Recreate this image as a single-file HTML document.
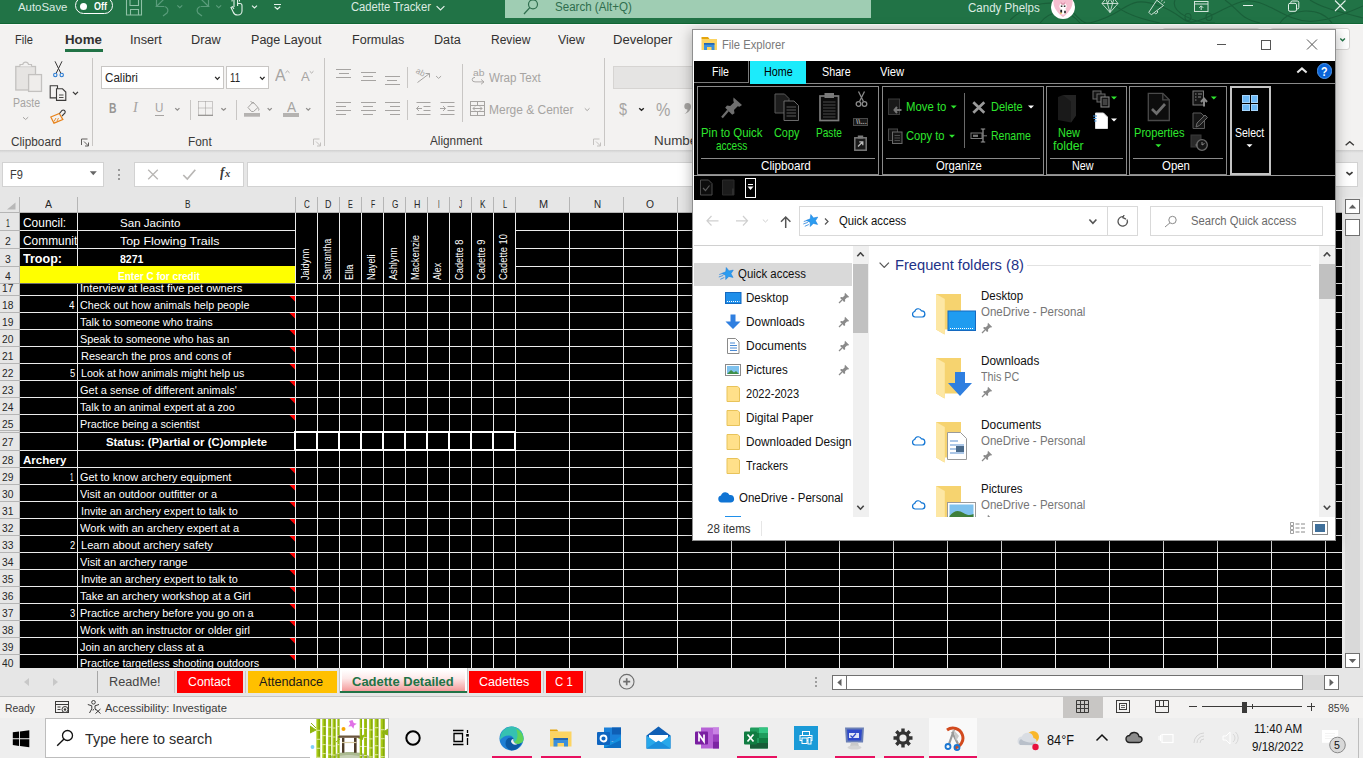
<!DOCTYPE html>
<html><head><meta charset="utf-8"><title>Cadette Tracker</title>
<style>
html,body{margin:0;padding:0;}
body{width:1363px;height:758px;overflow:hidden;position:relative;background:#e6e6e6;font-family:"Liberation Sans",sans-serif;}
#r{position:absolute;left:0;top:0;width:1363px;height:758px;overflow:hidden;}
#r div,#r svg{position:absolute;box-sizing:border-box;}
.t{white-space:nowrap;}
</style></head><body><div id="r">
<div style="left:0px;top:0px;width:1363px;height:23px;background:#217346;"></div>
<div style="left:0px;top:23px;width:1363px;height:1px;background:#106634;"></div>
<div style="left:505px;top:0px;width:366px;height:18px;background:#9fcdb3;"></div>
<svg style="left:1010px;top:0px;" width="353" height="23" viewBox="0 0 353 23"><path d="M0 20C20 2 45 -2 60 10S70 28 95 18S120 -5 150 6S170 30 200 16S235 -6 262 8S300 30 353 6M30 23C40 10 58 8 70 23M100 0C110 14 135 20 150 23M165 0C160 12 185 24 205 23M215 0C230 10 228 18 250 23M270 23C280 8 310 6 322 23M300 0C312 8 330 12 353 18M175 17a3 3.500 0 1 0 6 0a3 3.500 0 1 0 -6 0M196 17a3 3.500 0 1 0 6 0a3 3.500 0 1 0 -6 0" fill="none" stroke="#185a36" stroke-width="1.100" opacity="0.800"/></svg>
<div class="t" style="left:18.3px;top:-1px;font-size:11.7px;color:#dcebe2;line-height:15px;transform-origin:0 0;transform:scaleX(0.9754);">AutoSave</div>
<div style="left:74.8px;top:-3px;width:38.2px;height:16.6px;border:1px solid #fff;border-radius:9px;"></div>
<div style="left:79.7px;top:2.7px;width:7.2px;height:7.2px;background:#fff;border-radius:4px;"></div>
<div class="t" style="left:94.2px;top:-1px;font-size:10.5px;color:#fff;line-height:14px;transform-origin:0 0;transform:scaleX(0.8568);font-weight:bold;">Off</div>
<svg style="left:125px;top:-2px;" width="19" height="19" viewBox="0 0 19 19"><path d="M1.500 -1V17H16.500V-1M5 -1V7.500H13.500V-1M5.500 17V11.500H13.500V17" fill="none" stroke="#8fc1a6" stroke-width="1.100"/></svg>
<svg style="left:155px;top:-2px;" width="16" height="19" viewBox="0 0 16 19"><path d="M11 -1L1.500 8.500H9M1.500 8.500V1" fill="none" stroke="#5a9c7b" stroke-width="1.200"/><path d="M9 8.500L2 17.500" fill="none" stroke="#5a9c7b" stroke-width="0"/><path d="M9.500 8.500a4 4 0 0 1 2.500 6.500l-4 3" fill="none" stroke="#5a9c7b" stroke-width="1.200"/></svg>
<svg style="left:176px;top:4px;" width="7" height="5" viewBox="0 0 7 5"><g transform="translate(0.8,0.8)"><path d="M0.55 0.55L3 2.85L5.45 0.55" fill="none" stroke="#5a9c7b" stroke-width="1.1"/></g></svg>
<svg style="left:194px;top:-2px;" width="16" height="19" viewBox="0 0 16 19"><path d="M5 -1L14.500 8.500H7M14.500 8.500V1" fill="none" stroke="#5a9c7b" stroke-width="1.200"/><path d="M6.500 8.500a4 4 0 0 0 -2.500 6.500l4 3" fill="none" stroke="#5a9c7b" stroke-width="1.200"/></svg>
<svg style="left:215px;top:4px;" width="7" height="5" viewBox="0 0 7 5"><g transform="translate(0.7,0.8)"><path d="M0.55 0.55L3 2.85L5.45 0.55" fill="none" stroke="#5a9c7b" stroke-width="1.1"/></g></svg>
<svg style="left:230px;top:-2px;" width="13" height="18" viewBox="0 0 13 18"><path d="M4 9V2.500a1.800 1.800 0 0 1 3.600 0V8M7.600 5.500h2.400a2 2 0 0 1 2 2v5.500a4 4 0 0 1-4 4H7.500a4.500 4.500 0 0 1-4.300-3L1 9.500l1.500-.8L4 11" fill="none" stroke="#e4f1ea" stroke-width="1.100"/><path d="M2 3.500a4 4 0 0 1 1-3M9.600 3.500a4 4 0 0 0-1-3" fill="none" stroke="#e4f1ea" stroke-width="1"/></svg>
<svg style="left:251px;top:5px;" width="8" height="5" viewBox="0 0 8 5"><g transform="translate(0.4,0)"><path d="M0.6 0.6L3.1 2.9L5.6 0.6" fill="none" stroke="#e4f1ea" stroke-width="1.2"/></g></svg>
<div style="left:273.6px;top:3.6px;width:7.5px;height:1.1px;background:#e4f1ea;"></div>
<svg style="left:274px;top:6px;" width="8" height="5" viewBox="0 0 8 5"><g transform="translate(0,0.2)"><path d="M0.6 0.6L3.4 3L6.2 0.6" fill="none" stroke="#e4f1ea" stroke-width="1.2"/></g></svg>
<div class="t" style="left:350.9px;top:-1px;font-size:12px;color:#dcebe2;line-height:16px;transform-origin:0 0;transform:scaleX(0.9358);">Cadette Tracker</div>
<svg style="left:436px;top:5px;" width="10" height="6" viewBox="0 0 10 6"><g transform="translate(0,0.5)"><path d="M0.6 0.6L4.5 4.4L8.4 0.6" fill="none" stroke="#e4f1ea" stroke-width="1.2"/></g></svg>
<svg style="left:523px;top:-3px;" width="17" height="19" viewBox="0 0 17 19"><circle cx="10" cy="7.300" r="4.500" fill="none" stroke="#2f6e4e" stroke-width="1.200"/><path d="M6.800 10.600L1 17" stroke="#2f6e4e" stroke-width="1.300"/></svg>
<div class="t" style="left:554.5px;top:-1px;font-size:12px;color:#2f6e4e;line-height:16px;transform-origin:0 0;transform:scaleX(0.9635);">Search (Alt+Q)</div>
<div class="t" style="left:968.2px;top:0px;font-size:12px;color:#dcebe2;line-height:16px;transform-origin:0 0;transform:scaleX(0.9608);">Candy Phelps</div>
<div style="left:1051px;top:-5.3px;width:24px;height:24px;background:#ffffff;border-radius:12px;"></div>
<svg style="left:1051px;top:-6px;" width="25" height="25" viewBox="0 0 25 25"><g transform="translate(0,0.7)"><path d="M12 22.500C4 16 2.500 11 2.500 7.500a4.800 4.800 0 0 1 9.500-1.500a4.800 4.800 0 0 1 9.500 1.500c0 3.500-1.500 8.500-9.500 15z" fill="#f6bfd0"/><ellipse cx="12" cy="11.500" rx="3.600" ry="3" fill="#fff"/><ellipse cx="12" cy="16.500" rx="3.200" ry="3.300" fill="#fff"/><path d="M9.500 6.500l1.500 2h2l1.500-2l-1 3.500h-3z" fill="#d98aa5"/><rect x="9.800" y="10.800" width="1.600" height="1.400" fill="#222"/><rect x="12.800" y="10.800" width="1.600" height="1.400" fill="#222"/><path d="M9.300 15h1.800v3h-1.800zM13.200 16h1.600v2.600h-1.600z" fill="#222"/><rect x="9.200" y="17.800" width="1.500" height="1.400" fill="#e9b84a"/></g></svg>
<svg style="left:1101px;top:-2px;" width="18" height="17" viewBox="0 0 18 17"><g transform="translate(0.5,0)"><path d="M4.500 0.500h8l4 5l-8 9l-8-9zM0.500 5.500h16M4.500 0.500l4 14l4-14M6 5.500l2.500-5l2.500 5" fill="none" stroke="#cfe3d8" stroke-width="0.900"/></g></svg>
<svg style="left:1147px;top:-1px;" width="19" height="17" viewBox="0 0 19 17"><path d="M1.800 13.300L9.800 1.200l6.700 5.300L4.300 15.800z" fill="none" stroke="#cfe3d8" stroke-width="1"/><path d="M7.300 13.800a1.800 1.800 0 0 0 3 -2" fill="none" stroke="#cfe3d8" stroke-width="1"/><path d="M14.500 2.500l1-2M16.500 4l1.500-1.200M12.800 1l.3-1.500" stroke="#cfe3d8" stroke-width="0.900"/></svg>
<svg style="left:1194px;top:1px;" width="15" height="11" viewBox="0 0 15 11"><rect x="0.500" y="0.500" width="13.500" height="10" fill="none" stroke="#cfe3d8" stroke-width="1"/><path d="M0.500 3h13.500M7.200 9V5M5.200 6.800l2-2l2 2" fill="none" stroke="#cfe3d8" stroke-width="1"/></svg>
<div style="left:1243.3px;top:4.6px;width:10px;height:1px;background:#e4f1ea;"></div>
<svg style="left:1288px;top:0px;" width="13" height="13" viewBox="0 0 13 13"><g transform="translate(0,0.5)"><rect x="0.500" y="2.800" width="8" height="8" rx="1.500" fill="none" stroke="#e4f1ea" stroke-width="1"/><path d="M2.800 2.800V2a1.500 1.500 0 0 1 1.500-1.500h5a1.500 1.500 0 0 1 1.500 1.500v5a1.500 1.500 0 0 1-1.500 1.500h-.8" fill="none" stroke="#e4f1ea" stroke-width="1"/></g></svg>
<svg style="left:1334px;top:0px;" width="13" height="12" viewBox="0 0 13 12"><path d="M1 0.500l10.500 10.500M11.500 0.500l-10.500 10.500" stroke="#e4f1ea" stroke-width="1.100"/></svg>
<div style="left:0px;top:24px;width:1363px;height:126px;background:#f3f2f1;"></div>
<div style="left:0px;top:24px;width:1363px;height:1px;background:#fbfbfa;"></div>
<div style="left:0px;top:150px;width:1363px;height:3px;background:linear-gradient(#d0d0d0,#e6e6e6);"></div>
<div class="t" style="left:14.5px;top:31px;font-size:13.7px;color:#323130;line-height:17px;transform-origin:0 0;transform:scaleX(0.8103);">File</div>
<div class="t" style="left:65.4px;top:31px;font-size:13.7px;color:#323130;line-height:17px;transform-origin:0 0;transform:scaleX(0.9697);font-weight:bold;">Home</div>
<div class="t" style="left:130.2px;top:31px;font-size:13.7px;color:#323130;line-height:17px;transform-origin:0 0;transform:scaleX(0.9314);">Insert</div>
<div class="t" style="left:191.3px;top:31px;font-size:13.7px;color:#323130;line-height:17px;transform-origin:0 0;transform:scaleX(0.9274);">Draw</div>
<div class="t" style="left:251.2px;top:31px;font-size:13.7px;color:#323130;line-height:17px;transform-origin:0 0;transform:scaleX(0.9178);">Page Layout</div>
<div class="t" style="left:352.3px;top:31px;font-size:13.7px;color:#323130;line-height:17px;transform-origin:0 0;transform:scaleX(0.9178);">Formulas</div>
<div class="t" style="left:434px;top:31px;font-size:13.7px;color:#323130;line-height:17px;transform-origin:0 0;transform:scaleX(0.9226);">Data</div>
<div class="t" style="left:490.5px;top:31px;font-size:13.7px;color:#323130;line-height:17px;transform-origin:0 0;transform:scaleX(0.8784);">Review</div>
<div class="t" style="left:558.3px;top:31px;font-size:13.7px;color:#323130;line-height:17px;transform-origin:0 0;transform:scaleX(0.9054);">View</div>
<div class="t" style="left:613.3px;top:31px;font-size:13.7px;color:#323130;line-height:17px;transform-origin:0 0;transform:scaleX(0.9529);">Developer</div>
<div style="left:65.4px;top:48.5px;width:37.2px;height:3px;background:#217346;"></div>
<svg style="left:14px;top:60px;" width="30" height="34" viewBox="0 0 30 34"><rect x="1.800" y="6.500" width="19.700" height="23.500" fill="#e6e4e2" stroke="#c3c1bf" stroke-width="1.300"/><path d="M6 6.500V4.500h2.800a2.900 2.900 0 0 1 5.700 0H17.500v2" fill="#f3f2f1" stroke="#c3c1bf" stroke-width="1.200"/><rect x="14.600" y="14.600" width="12.900" height="16.800" fill="#efedeb" stroke="#c3c1bf" stroke-width="1.300"/></svg>
<div class="t" style="left:13px;top:95px;font-size:12px;color:#a6a4a2;line-height:16px;transform-origin:0 0;transform:scaleX(0.8798);">Paste</div>
<svg style="left:22px;top:116px;" width="8" height="5" viewBox="0 0 8 5"><g transform="translate(0.5,0.7)"><path d="M0.5 0.5L3.1 2.8L5.7 0.5" fill="none" stroke="#a6a4a2" stroke-width="1"/></g></svg>
<svg style="left:53px;top:61px;" width="11" height="17" viewBox="0 0 11 17"><path d="M2 0.300L7.700 12M9 0.300L3.300 12" stroke="#3b3a39" stroke-width="1" fill="none"/><circle cx="2.300" cy="14" r="1.700" fill="none" stroke="#2b7cd3" stroke-width="1.100"/><circle cx="8.700" cy="14" r="1.700" fill="none" stroke="#2b7cd3" stroke-width="1.100"/></svg>
<svg style="left:49px;top:85px;" width="19" height="18" viewBox="0 0 19 18"><g transform="translate(0.5,0)"><path d="M0.700 0.700h7.300v12.200h-7.300z" fill="#f3f2f1" stroke="#3b3a39" stroke-width="1.100"/><path d="M7 3.800h6l3.300 3.300v8.300H7z" fill="#f3f2f1" stroke="#3b3a39" stroke-width="1.100"/><path d="M9.500 10h4.500M9.500 12.500h4.500" stroke="#3b3a39" stroke-width="0.900" fill="none"/></g></svg>
<svg style="left:72px;top:91px;" width="8" height="5" viewBox="0 0 8 5"><g transform="translate(0.3,0.2)"><path d="M0.65 0.65L3.15 3.15L5.65 0.65" fill="none" stroke="#3b3a39" stroke-width="1.3"/></g></svg>
<svg style="left:50px;top:108px;" width="17" height="16" viewBox="0 0 17 16"><path d="M0.800 9l8.500-3.500l3.500 6l-8.800 3.700z" fill="none" stroke="#e8831a" stroke-width="1.300"/><path d="M4 13.500l2-3.500M7 13l1.500-3" stroke="#e8831a" stroke-width="0.900"/><path d="M9.500 5.500l2.500-3a2 2 0 0 1 3 2.500l-3 3" fill="none" stroke="#3b3a39" stroke-width="1.100"/></svg>
<div class="t" style="left:11.2px;top:134px;font-size:12px;color:#3b3a39;line-height:16px;transform-origin:0 0;transform:scaleX(0.9813);">Clipboard</div>
<svg style="left:81px;top:138px;" width="10" height="10" viewBox="0 0 10 10"><g transform="translate(0,0.5)"><path d="M0.500 6.500V0.500H6.500M3 3l4.500 4.500M7.500 4v3.500H4" fill="none" stroke="#605e5c" stroke-width="1"/></g></svg>
<div style="left:92px;top:58px;width:1px;height:88px;background:#c8c6c4;"></div>
<div style="left:101px;top:66px;width:123px;height:23px;background:#fff;border:1px solid #c8c6c4;"></div>
<div class="t" style="left:104.8px;top:70px;font-size:12.3px;color:#252423;line-height:16px;transform-origin:0 0;transform:scaleX(0.9435);">Calibri</div>
<svg style="left:214px;top:76px;" width="7" height="5" viewBox="0 0 7 5"><g transform="translate(0.5,0.2)"><path d="M0.65 0.65L2.9 3.15L5.15 0.65" fill="none" stroke="#252423" stroke-width="1.3"/></g></svg>
<div style="left:226px;top:66px;width:43px;height:23px;background:#fff;border:1px solid #c8c6c4;"></div>
<div class="t" style="left:230px;top:70px;font-size:12.3px;color:#252423;line-height:16px;transform-origin:0 0;transform:scaleX(0.7836);">11</div>
<svg style="left:259px;top:76px;" width="7" height="5" viewBox="0 0 7 5"><g transform="translate(0.4,0.2)"><path d="M0.65 0.65L2.9 3.15L5.15 0.65" fill="none" stroke="#252423" stroke-width="1.3"/></g></svg>
<div class="t" style="left:275px;top:66px;font-size:15.6px;color:#a6a4a2;line-height:19px;transform-origin:0 0;transform:scaleX(1.0180);">A</div>
<svg style="left:285px;top:70px;" width="6" height="4" viewBox="0 0 6 4"><g transform="translate(0,0.5)"><path d="M0.45 2.35L2.5 0.45L4.55 2.35" fill="none" stroke="#a6a4a2" stroke-width="0.9"/></g></svg>
<div class="t" style="left:300.6px;top:69px;font-size:12.2px;color:#a6a4a2;line-height:16px;transform-origin:0 0;transform:scaleX(1.0683);">A</div>
<svg style="left:309px;top:70px;" width="6" height="4" viewBox="0 0 6 4"><g transform="translate(0.3,0.8)"><path d="M0.45 0.45L2.3 2.25L4.15 0.45" fill="none" stroke="#a6a4a2" stroke-width="0.9"/></g></svg>
<div class="t" style="left:108.5px;top:99px;font-size:14px;color:#989694;line-height:18px;transform-origin:0 0;transform:scaleX(0.7415);font-weight:bold;">B</div>
<div class="t" style="left:133.07px;top:99px;font-size:14px;color:#a6a4a2;line-height:18px;transform-origin:0 0;transform:scaleX(1.0218);font-style:italic;font-family:'Liberation Serif',serif;">I</div>
<div class="t" style="left:155px;top:99px;font-size:13.3px;color:#a6a4a2;line-height:17px;transform-origin:0 0;transform:scaleX(0.8742);">U</div>
<div style="left:155px;top:114.6px;width:8.5px;height:1px;background:#a6a4a2;"></div>
<svg style="left:174px;top:107px;" width="7" height="5" viewBox="0 0 7 5"><g transform="translate(0.6,0.5)"><path d="M0.65 0.65L2.75 2.65L4.85 0.65" fill="none" stroke="#8f8d8b" stroke-width="1.3"/></g></svg>
<div style="left:190px;top:99.5px;width:1px;height:20px;background:#c8c6c4;"></div>
<svg style="left:198px;top:101px;" width="16" height="16" viewBox="0 0 16 16"><path d="M0.500 0.500h14M0.500 0.500v13M14.500 0.500v13M7.500 0.500v13M0.500 7h14" fill="none" stroke="#9d9b99" stroke-width="1" stroke-dasharray="1 1"/><path d="M0 14.300h15" stroke="#8f8d8b" stroke-width="1.200"/></svg>
<svg style="left:220px;top:107px;" width="7" height="5" viewBox="0 0 7 5"><g transform="translate(0.7,0.5)"><path d="M0.65 0.65L2.9 2.65L5.15 0.65" fill="none" stroke="#8f8d8b" stroke-width="1.3"/></g></svg>
<div style="left:236px;top:99.5px;width:1px;height:20px;background:#c8c6c4;"></div>
<svg style="left:244px;top:100px;" width="18" height="18" viewBox="0 0 18 18"><path d="M4 7.500l5-5.500l5 5.500l-4.500 4h-2z" fill="none" stroke="#a6a4a2" stroke-width="1"/><path d="M6.500 1l3 3M14 7.500c1 1.500 1.500 2.500 0 3" stroke="#a6a4a2" stroke-width="1" fill="none"/><rect x="0" y="13" width="16" height="3.700" fill="#b5b3b1"/></svg>
<svg style="left:267px;top:107px;" width="7" height="5" viewBox="0 0 7 5"><g transform="translate(0,0.5)"><path d="M0.65 0.65L2.7 2.65L4.75 0.65" fill="none" stroke="#8f8d8b" stroke-width="1.3"/></g></svg>
<div class="t" style="left:286.6px;top:97px;font-size:15.4px;color:#a6a4a2;line-height:19px;transform-origin:0 0;transform:scaleX(0.8853);">A</div>
<div style="left:283px;top:113px;width:16px;height:3.7px;background:#b5b3b1;"></div>
<svg style="left:305px;top:107px;" width="7" height="5" viewBox="0 0 7 5"><g transform="translate(0.5,0.5)"><path d="M0.65 0.65L2.75 2.65L4.85 0.65" fill="none" stroke="#8f8d8b" stroke-width="1.3"/></g></svg>
<div class="t" style="left:188.3px;top:134px;font-size:12px;color:#3b3a39;line-height:16px;transform-origin:0 0;transform:scaleX(0.9875);">Font</div>
<svg style="left:313px;top:138px;" width="10" height="10" viewBox="0 0 10 10"><g transform="translate(0,0.5)"><path d="M0.500 6.500V0.500H6.500M3 3l4.500 4.500M7.500 4v3.500H4" fill="none" stroke="#c3c1bf" stroke-width="1"/></g></svg>
<div style="left:324px;top:58px;width:1px;height:88px;background:#c8c6c4;"></div>
<div style="left:336.4px;top:68.8px;width:14.5px;height:1px;background:#a6a4a2;"></div>
<div style="left:338.65px;top:72.9px;width:10px;height:1px;background:#a6a4a2;"></div>
<div style="left:336.4px;top:77px;width:14.5px;height:1px;background:#a6a4a2;"></div>
<div style="left:361px;top:72px;width:14.5px;height:1px;background:#a6a4a2;"></div>
<div style="left:363.25px;top:76px;width:10px;height:1px;background:#a6a4a2;"></div>
<div style="left:361px;top:80px;width:14.5px;height:1px;background:#a6a4a2;"></div>
<div style="left:385px;top:75.5px;width:14.5px;height:1px;background:#a6a4a2;"></div>
<div style="left:387.25px;top:79.5px;width:10px;height:1px;background:#a6a4a2;"></div>
<div style="left:385px;top:83.5px;width:14.5px;height:1px;background:#a6a4a2;"></div>
<div style="left:407px;top:67px;width:1px;height:21px;background:#c8c6c4;"></div>
<svg style="left:415px;top:68px;" width="17" height="17" viewBox="0 0 17 17"><path d="M2.500 14.500L14.500 5.500M14.500 5.500h-4M14.500 5.500v4" fill="none" stroke="#a6a4a2" stroke-width="1"/></svg>
<div class="t" style="left:415.5px;top:66px;transform:rotate(28deg) scaleX(0.95);xleft:0px;xtop:-9px;font-size:8.5px;color:#a6a4a2;line-height:12px;xt:scaleX(0.9518);">ab</div>
<svg style="left:435px;top:75px;" width="7" height="5" viewBox="0 0 7 5"><g transform="translate(0.6,0.6)"><path d="M0.5 0.5L3 2.8L5.5 0.5" fill="none" stroke="#a6a4a2" stroke-width="1"/></g></svg>
<div style="left:336.4px;top:102px;width:14.5px;height:1px;background:#a6a4a2;"></div>
<div style="left:336.4px;top:106px;width:10px;height:1px;background:#a6a4a2;"></div>
<div style="left:336.4px;top:110px;width:14.5px;height:1px;background:#a6a4a2;"></div>
<div style="left:336.4px;top:114px;width:10px;height:1px;background:#a6a4a2;"></div>
<div style="left:361px;top:102px;width:14.5px;height:1px;background:#a6a4a2;"></div>
<div style="left:363.25px;top:106px;width:10px;height:1px;background:#a6a4a2;"></div>
<div style="left:361px;top:110px;width:14.5px;height:1px;background:#a6a4a2;"></div>
<div style="left:363.25px;top:114px;width:10px;height:1px;background:#a6a4a2;"></div>
<div style="left:385px;top:102px;width:14.5px;height:1px;background:#a6a4a2;"></div>
<div style="left:389.5px;top:106px;width:10px;height:1px;background:#a6a4a2;"></div>
<div style="left:385px;top:110px;width:14.5px;height:1px;background:#a6a4a2;"></div>
<div style="left:389.5px;top:114px;width:10px;height:1px;background:#a6a4a2;"></div>
<div style="left:407px;top:99.5px;width:1px;height:20px;background:#c8c6c4;"></div>
<svg style="left:416px;top:101px;" width="15" height="15" viewBox="0 0 15 15"><path d="M0.500 1.500h14M7.500 5.500h7M7.500 9.500h7M0.500 13.500h14M0.500 7.500h5.500M3 5L0.500 7.500l2.500 2.500" fill="none" stroke="#a6a4a2" stroke-width="1"/></svg>
<svg style="left:440px;top:101px;" width="15" height="15" viewBox="0 0 15 15"><path d="M0.500 1.500h14M7.500 5.500h7M7.500 9.500h7M0.500 13.500h14M0 7.500h5.500M3 5L5.500 7.500L3 10" fill="none" stroke="#a6a4a2" stroke-width="1"/></svg>
<div style="left:462px;top:64px;width:1px;height:58px;background:#c8c6c4;"></div>
<div class="t" style="left:472.5px;top:66px;font-size:9.5px;color:#a6a4a2;line-height:13px;transform-origin:0 0;transform:scaleX(1.0881);">ab</div>
<svg style="left:471px;top:77px;" width="15" height="9" viewBox="0 0 15 9"><g transform="translate(0.5,0)"><path d="M3.500 0.500a2.800 2.800 0 0 0 0 5.600h9M9.500 3l3 3.100l-3 3" fill="none" stroke="#a6a4a2" stroke-width="1" transform="scale(1,0.800)"/></g></svg>
<div class="t" style="left:489px;top:70px;font-size:12px;color:#a6a4a2;line-height:16px;transform-origin:0 0;transform:scaleX(0.9649);">Wrap Text</div>
<svg style="left:470px;top:101px;" width="16" height="16" viewBox="0 0 16 16"><rect x="0.500" y="0.500" width="14" height="14" fill="none" stroke="#a6a4a2" stroke-width="1"/><path d="M0.500 4.500h14M0.500 10.500h14M7.500 0.500v4M7.500 10.500v4M3 7.500h9M5 5.500l-2 2l2 2M10 5.500l2 2l-2 2" fill="none" stroke="#a6a4a2" stroke-width="1"/></svg>
<div class="t" style="left:489.2px;top:102px;font-size:12px;color:#a6a4a2;line-height:16px;transform-origin:0 0;transform:scaleX(0.9974);">Merge &amp; Center</div>
<svg style="left:584px;top:107px;" width="7" height="5" viewBox="0 0 7 5"><g transform="translate(0.3,0.8)"><path d="M0.5 0.5L2.85 2.8L5.2 0.5" fill="none" stroke="#a6a4a2" stroke-width="1"/></g></svg>
<div class="t" style="left:430.3px;top:133px;font-size:12px;color:#3b3a39;line-height:16px;transform-origin:0 0;transform:scaleX(0.9800);">Alignment</div>
<svg style="left:593px;top:138px;" width="10" height="10" viewBox="0 0 10 10"><g transform="translate(0,0.5)"><path d="M0.500 6.500V0.500H6.500M3 3l4.500 4.500M7.500 4v3.500H4" fill="none" stroke="#c3c1bf" stroke-width="1"/></g></svg>
<div style="left:604px;top:58px;width:1px;height:88px;background:#c8c6c4;"></div>
<div style="left:613px;top:66px;width:120px;height:23px;background:#e5e4e3;border:1px solid #d6d4d2;"></div>
<div class="t" style="left:619.4px;top:99px;font-size:17px;color:#a6a4a2;line-height:21px;transform-origin:0 0;transform:scaleX(0.8479);">$</div>
<svg style="left:638px;top:107px;" width="7" height="5" viewBox="0 0 7 5"><g transform="translate(0.5,0.5)"><path d="M0.7 0.7L3 2.8L5.3 0.7" fill="none" stroke="#252423" stroke-width="1.4"/></g></svg>
<div class="t" style="left:655.6px;top:98px;font-size:18.4px;color:#a6a4a2;line-height:23px;transform-origin:0 0;transform:scaleX(0.8793);">%</div>
<svg style="left:683px;top:103px;" width="9" height="13" viewBox="0 0 9 13"><path d="M4.500 0a3.500 3.500 0 0 1 3.500 3.500c0 3.500-2.500 6-6.500 7.500c2-1.500 3-3 3-4.500a3.200 3.200 0 0 1-3.200-3.200a3.300 3.300 0 0 1 3.200-3.300z" fill="#a6a4a2"/></svg>
<div class="t" style="left:654.3px;top:133px;font-size:12px;color:#3b3a39;line-height:16px;transform-origin:0 0;transform:scaleX(1.1174);">Number</div>
<div style="left:1162px;top:28px;width:98px;height:22px;background:#fff;border:1px solid #d6d4d2;border-radius:3px;"></div>
<div style="left:1270px;top:28px;width:80px;height:22px;background:#fff;border:1px solid #d6d4d2;border-radius:3px;"></div>
<svg style="left:1339px;top:37px;" width="7" height="5" viewBox="0 0 7 5"><g transform="translate(0.6,0.8)"><path d="M0.7 0.7L3 2.9L5.3 0.7" fill="none" stroke="#217346" stroke-width="1.4"/></g></svg>
<svg style="left:1345px;top:141px;" width="10" height="5" viewBox="0 0 10 5"><path d="M0.65 4.35L4.75 0.65L8.85 4.35" fill="none" stroke="#3b3a39" stroke-width="1.3"/></svg>
<div style="left:0px;top:153px;width:1363px;height:44px;background:#e6e6e6;"></div>
<div style="left:2px;top:162px;width:102px;height:25px;background:#fff;border:1px solid #d2d2d2;"></div>
<div class="t" style="left:9.5px;top:167px;font-size:12.2px;color:#3b3a39;line-height:16px;transform-origin:0 0;transform:scaleX(0.9057);">F9</div>
<svg style="left:89px;top:171px;" width="9" height="6" viewBox="0 0 9 6"><g transform="translate(0.8,0.2)"><path d="M0 0h7L3.500 4z" fill="#666"/></g></svg>
<div style="left:118.3px;top:169.3px;width:1.8px;height:1.8px;background:#9a9a9a;"></div>
<div style="left:118.3px;top:173.8px;width:1.8px;height:1.8px;background:#9a9a9a;"></div>
<div style="left:118.3px;top:178.2px;width:1.8px;height:1.8px;background:#9a9a9a;"></div>
<div style="left:134px;top:162px;width:110px;height:25px;background:#fff;border:1px solid #d2d2d2;"></div>
<svg style="left:147px;top:169px;" width="12" height="12" viewBox="0 0 12 12"><g transform="translate(0.5,0)"><path d="M0.700 0.700l9.600 9.600M10.300 0.700l-9.600 9.600" stroke="#b8b6b4" stroke-width="1.300"/></g></svg>
<svg style="left:182px;top:169px;" width="15" height="12" viewBox="0 0 15 12"><g transform="translate(0.5,0)"><path d="M0.800 6l4 4l8-9.300" fill="none" stroke="#b8b6b4" stroke-width="1.700"/></g></svg>
<div class="t" style="left:219.5px;top:163px;font-size:15px;color:#3b3a39;line-height:19px;transform-origin:0 0;transform:scaleX(0.8782);font-weight:bold;font-style:italic;font-family:'Liberation Serif',serif;">f</div>
<div class="t" style="left:225.43px;top:167px;font-size:10.5px;color:#3b3a39;line-height:14px;transform-origin:0 0;transform:scaleX(1.0035);font-weight:bold;font-style:italic;font-family:'Liberation Serif',serif;">x</div>
<div style="left:247px;top:162px;width:1111px;height:25px;background:#fff;border:1px solid #d2d2d2;"></div>
<svg style="left:1345px;top:171px;" width="9" height="6" viewBox="0 0 9 6"><g transform="translate(0.6,0.3)"><path d="M0.85 0.85L3.9 3.45L6.95 0.85" fill="none" stroke="#3b3a39" stroke-width="1.7"/></g></svg>
<div style="left:0px;top:197px;width:1342px;height:16px;background:#e6e6e6;"></div>
<div style="left:20px;top:213px;width:1322px;height:455px;background:#000;"></div>
<div style="left:19px;top:197px;width:1px;height:16px;background:#b5b5b5;"></div>
<div style="left:77px;top:197px;width:1px;height:16px;background:#b5b5b5;"></div>
<div style="left:295px;top:197px;width:1px;height:16px;background:#b5b5b5;"></div>
<div style="left:317px;top:197px;width:1px;height:16px;background:#b5b5b5;"></div>
<div style="left:339px;top:197px;width:1px;height:16px;background:#b5b5b5;"></div>
<div style="left:361px;top:197px;width:1px;height:16px;background:#b5b5b5;"></div>
<div style="left:383px;top:197px;width:1px;height:16px;background:#b5b5b5;"></div>
<div style="left:405px;top:197px;width:1px;height:16px;background:#b5b5b5;"></div>
<div style="left:427px;top:197px;width:1px;height:16px;background:#b5b5b5;"></div>
<div style="left:449px;top:197px;width:1px;height:16px;background:#b5b5b5;"></div>
<div style="left:471px;top:197px;width:1px;height:16px;background:#b5b5b5;"></div>
<div style="left:493px;top:197px;width:1px;height:16px;background:#b5b5b5;"></div>
<div style="left:515px;top:197px;width:1px;height:16px;background:#b5b5b5;"></div>
<div style="left:569px;top:197px;width:1px;height:16px;background:#b5b5b5;"></div>
<div style="left:623px;top:197px;width:1px;height:16px;background:#b5b5b5;"></div>
<div style="left:677px;top:197px;width:1px;height:16px;background:#b5b5b5;"></div>
<div style="left:731px;top:197px;width:1px;height:16px;background:#b5b5b5;"></div>
<div style="left:785px;top:197px;width:1px;height:16px;background:#b5b5b5;"></div>
<div style="left:839px;top:197px;width:1px;height:16px;background:#b5b5b5;"></div>
<div style="left:893px;top:197px;width:1px;height:16px;background:#b5b5b5;"></div>
<div style="left:947px;top:197px;width:1px;height:16px;background:#b5b5b5;"></div>
<div style="left:1001px;top:197px;width:1px;height:16px;background:#b5b5b5;"></div>
<div style="left:1055px;top:197px;width:1px;height:16px;background:#b5b5b5;"></div>
<div style="left:1109px;top:197px;width:1px;height:16px;background:#b5b5b5;"></div>
<div style="left:1163px;top:197px;width:1px;height:16px;background:#b5b5b5;"></div>
<div style="left:1217px;top:197px;width:1px;height:16px;background:#b5b5b5;"></div>
<div style="left:1271px;top:197px;width:1px;height:16px;background:#b5b5b5;"></div>
<div style="left:1325px;top:197px;width:1px;height:16px;background:#b5b5b5;"></div>
<div style="left:0px;top:212px;width:1342px;height:1px;background:#b5b5b5;"></div>
<svg style="left:6px;top:201px;" width="10" height="9" viewBox="0 0 10 9"><path d="M9.500 1.500V8.500H1z" fill="#b8b8b8"/></svg>
<div class="t" style="left:45px;top:197px;font-size:11.4px;color:#262626;line-height:14px;transform-origin:0 0;transform:scaleX(0.9199);">A</div>
<div class="t" style="left:184.5px;top:197px;font-size:11.4px;color:#262626;line-height:14px;transform-origin:0 0;transform:scaleX(0.7228);">B</div>
<div class="t" style="left:303.5px;top:197px;font-size:11.4px;color:#262626;line-height:14px;transform-origin:0 0;transform:scaleX(0.7042);">C</div>
<div class="t" style="left:325.3px;top:197px;font-size:11.4px;color:#262626;line-height:14px;transform-origin:0 0;transform:scaleX(0.7770);">D</div>
<div class="t" style="left:348.2px;top:197px;font-size:11.4px;color:#262626;line-height:14px;transform-origin:0 0;transform:scaleX(0.6308);">E</div>
<div class="t" style="left:370.8px;top:197px;font-size:11.4px;color:#262626;line-height:14px;transform-origin:0 0;transform:scaleX(0.6040);">F</div>
<div class="t" style="left:391.9px;top:197px;font-size:11.4px;color:#262626;line-height:14px;transform-origin:0 0;transform:scaleX(0.7221);">G</div>
<div class="t" style="left:413.9px;top:197px;font-size:11.4px;color:#262626;line-height:14px;transform-origin:0 0;transform:scaleX(0.7770);">H</div>
<div class="t" style="left:437.5px;top:197px;font-size:11.4px;color:#262626;line-height:14px;transform-origin:0 0;transform:scaleX(0.5058);">I</div>
<div class="t" style="left:458.8px;top:197px;font-size:11.4px;color:#262626;line-height:14px;transform-origin:0 0;transform:scaleX(0.5614);">J</div>
<div class="t" style="left:480.3px;top:197px;font-size:11.4px;color:#262626;line-height:14px;transform-origin:0 0;transform:scaleX(0.7228);">K</div>
<div class="t" style="left:502.9px;top:197px;font-size:11.4px;color:#262626;line-height:14px;transform-origin:0 0;transform:scaleX(0.6480);">L</div>
<div class="t" style="left:538.6px;top:197px;font-size:11.4px;color:#262626;line-height:14px;transform-origin:0 0;transform:scaleX(0.9589);">M</div>
<div class="t" style="left:593.9px;top:197px;font-size:11.4px;color:#262626;line-height:14px;transform-origin:0 0;transform:scaleX(0.8620);">N</div>
<div class="t" style="left:646.4px;top:197px;font-size:11.4px;color:#262626;line-height:14px;transform-origin:0 0;transform:scaleX(0.9026);">O</div>
<div style="left:0px;top:213px;width:19px;height:455px;background:#e6e6e6;"></div>
<div style="left:19px;top:213px;width:1px;height:455px;background:#b5b5b5;"></div>
<div style="left:0px;top:230px;width:19px;height:1px;background:#b5b5b5;"></div>
<div style="left:0px;top:248px;width:19px;height:1px;background:#b5b5b5;"></div>
<div style="left:0px;top:266px;width:19px;height:1px;background:#b5b5b5;"></div>
<div style="left:0px;top:283px;width:19px;height:1px;background:#b5b5b5;"></div>
<div style="left:0px;top:295px;width:19px;height:1px;background:#b5b5b5;"></div>
<div style="left:0px;top:312px;width:19px;height:1px;background:#b5b5b5;"></div>
<div style="left:0px;top:329px;width:19px;height:1px;background:#b5b5b5;"></div>
<div style="left:0px;top:346px;width:19px;height:1px;background:#b5b5b5;"></div>
<div style="left:0px;top:363px;width:19px;height:1px;background:#b5b5b5;"></div>
<div style="left:0px;top:380px;width:19px;height:1px;background:#b5b5b5;"></div>
<div style="left:0px;top:397px;width:19px;height:1px;background:#b5b5b5;"></div>
<div style="left:0px;top:414px;width:19px;height:1px;background:#b5b5b5;"></div>
<div style="left:0px;top:432px;width:19px;height:1px;background:#b5b5b5;"></div>
<div style="left:0px;top:450px;width:19px;height:1px;background:#b5b5b5;"></div>
<div style="left:0px;top:467px;width:19px;height:1px;background:#b5b5b5;"></div>
<div style="left:0px;top:484px;width:19px;height:1px;background:#b5b5b5;"></div>
<div style="left:0px;top:501px;width:19px;height:1px;background:#b5b5b5;"></div>
<div style="left:0px;top:518px;width:19px;height:1px;background:#b5b5b5;"></div>
<div style="left:0px;top:535px;width:19px;height:1px;background:#b5b5b5;"></div>
<div style="left:0px;top:552px;width:19px;height:1px;background:#b5b5b5;"></div>
<div style="left:0px;top:569px;width:19px;height:1px;background:#b5b5b5;"></div>
<div style="left:0px;top:586px;width:19px;height:1px;background:#b5b5b5;"></div>
<div style="left:0px;top:603px;width:19px;height:1px;background:#b5b5b5;"></div>
<div style="left:0px;top:620px;width:19px;height:1px;background:#b5b5b5;"></div>
<div style="left:0px;top:637px;width:19px;height:1px;background:#b5b5b5;"></div>
<div style="left:0px;top:654px;width:19px;height:1px;background:#b5b5b5;"></div>
<div style="left:0px;top:430px;width:19px;height:1px;background:#b5b5b5;"></div>
<div style="left:0;top:284px;width:19px;height:384px;overflow:hidden;">
</div>
<div class="t" style="left:6.2px;top:216px;font-size:11.4px;color:#262626;line-height:14px;transform-origin:0 0;transform:scaleX(0.6006);">1</div>
<div style="left:0;top:284px;width:19px;height:384px;overflow:hidden;">
</div>
<div class="t" style="left:4.8px;top:234px;font-size:11.4px;color:#262626;line-height:14px;transform-origin:0 0;transform:scaleX(0.9167);">2</div>
<div style="left:0;top:284px;width:19px;height:384px;overflow:hidden;">
</div>
<div class="t" style="left:4.8px;top:252px;font-size:11.4px;color:#262626;line-height:14px;transform-origin:0 0;transform:scaleX(0.9167);">3</div>
<div style="left:0;top:284px;width:19px;height:384px;overflow:hidden;">
</div>
<div class="t" style="left:4.8px;top:269px;font-size:11.4px;color:#262626;line-height:14px;transform-origin:0 0;transform:scaleX(0.9167);">4</div>
<div style="left:0;top:284px;width:19px;height:384px;overflow:hidden;">
<div class="t" style="left:2.2px;top:-3px;font-size:11.4px;color:#262626;line-height:14px;transform-origin:0 0;transform:scaleX(0.8989);">17</div>
<div class="t" style="left:2.2px;top:14px;font-size:11.4px;color:#262626;line-height:14px;transform-origin:0 0;transform:scaleX(0.8989);">18</div>
<div class="t" style="left:2.2px;top:31px;font-size:11.4px;color:#262626;line-height:14px;transform-origin:0 0;transform:scaleX(0.8989);">19</div>
<div class="t" style="left:2.2px;top:48px;font-size:11.4px;color:#262626;line-height:14px;transform-origin:0 0;transform:scaleX(0.8989);">20</div>
<div class="t" style="left:2.2px;top:65px;font-size:11.4px;color:#262626;line-height:14px;transform-origin:0 0;transform:scaleX(0.8989);">21</div>
<div class="t" style="left:2.2px;top:82px;font-size:11.4px;color:#262626;line-height:14px;transform-origin:0 0;transform:scaleX(0.8989);">22</div>
<div class="t" style="left:2.2px;top:99px;font-size:11.4px;color:#262626;line-height:14px;transform-origin:0 0;transform:scaleX(0.8989);">23</div>
<div class="t" style="left:2.2px;top:116px;font-size:11.4px;color:#262626;line-height:14px;transform-origin:0 0;transform:scaleX(0.8989);">24</div>
<div class="t" style="left:2.2px;top:133px;font-size:11.4px;color:#262626;line-height:14px;transform-origin:0 0;transform:scaleX(0.8989);">25</div>
<div class="t" style="left:2.2px;top:151px;font-size:11.4px;color:#262626;line-height:14px;transform-origin:0 0;transform:scaleX(0.8989);">27</div>
<div class="t" style="left:2.2px;top:169px;font-size:11.4px;color:#262626;line-height:14px;transform-origin:0 0;transform:scaleX(0.8989);">28</div>
<div class="t" style="left:2.2px;top:186px;font-size:11.4px;color:#262626;line-height:14px;transform-origin:0 0;transform:scaleX(0.8989);">29</div>
<div class="t" style="left:2.2px;top:203px;font-size:11.4px;color:#262626;line-height:14px;transform-origin:0 0;transform:scaleX(0.8989);">30</div>
<div class="t" style="left:2.2px;top:220px;font-size:11.4px;color:#262626;line-height:14px;transform-origin:0 0;transform:scaleX(0.8989);">31</div>
<div class="t" style="left:2.2px;top:237px;font-size:11.4px;color:#262626;line-height:14px;transform-origin:0 0;transform:scaleX(0.8989);">32</div>
<div class="t" style="left:2.2px;top:254px;font-size:11.4px;color:#262626;line-height:14px;transform-origin:0 0;transform:scaleX(0.8989);">33</div>
<div class="t" style="left:2.2px;top:271px;font-size:11.4px;color:#262626;line-height:14px;transform-origin:0 0;transform:scaleX(0.8989);">34</div>
<div class="t" style="left:2.2px;top:288px;font-size:11.4px;color:#262626;line-height:14px;transform-origin:0 0;transform:scaleX(0.8989);">35</div>
<div class="t" style="left:2.2px;top:305px;font-size:11.4px;color:#262626;line-height:14px;transform-origin:0 0;transform:scaleX(0.8989);">36</div>
<div class="t" style="left:2.2px;top:322px;font-size:11.4px;color:#262626;line-height:14px;transform-origin:0 0;transform:scaleX(0.8989);">37</div>
<div class="t" style="left:2.2px;top:339px;font-size:11.4px;color:#262626;line-height:14px;transform-origin:0 0;transform:scaleX(0.8989);">38</div>
<div class="t" style="left:2.2px;top:356px;font-size:11.4px;color:#262626;line-height:14px;transform-origin:0 0;transform:scaleX(0.8989);">39</div>
<div class="t" style="left:2.2px;top:372px;font-size:11.4px;color:#262626;line-height:14px;transform-origin:0 0;transform:scaleX(0.8989);">40</div>
</div>
<div style="left:20px;top:230px;width:1322px;height:1px;background:#ebebeb;"></div>
<div style="left:20px;top:248px;width:1322px;height:1px;background:#ebebeb;"></div>
<div style="left:20px;top:266px;width:1322px;height:1px;background:#ebebeb;"></div>
<div style="left:20px;top:283px;width:1322px;height:1px;background:#ebebeb;"></div>
<div style="left:20px;top:295px;width:1322px;height:1px;background:#ebebeb;"></div>
<div style="left:20px;top:312px;width:1322px;height:1px;background:#ebebeb;"></div>
<div style="left:20px;top:329px;width:1322px;height:1px;background:#ebebeb;"></div>
<div style="left:20px;top:346px;width:1322px;height:1px;background:#ebebeb;"></div>
<div style="left:20px;top:363px;width:1322px;height:1px;background:#ebebeb;"></div>
<div style="left:20px;top:380px;width:1322px;height:1px;background:#ebebeb;"></div>
<div style="left:20px;top:397px;width:1322px;height:1px;background:#ebebeb;"></div>
<div style="left:20px;top:414px;width:1322px;height:1px;background:#ebebeb;"></div>
<div style="left:20px;top:432px;width:1322px;height:1px;background:#ebebeb;"></div>
<div style="left:20px;top:450px;width:1322px;height:1px;background:#ebebeb;"></div>
<div style="left:20px;top:467px;width:1322px;height:1px;background:#ebebeb;"></div>
<div style="left:20px;top:484px;width:1322px;height:1px;background:#ebebeb;"></div>
<div style="left:20px;top:501px;width:1322px;height:1px;background:#ebebeb;"></div>
<div style="left:20px;top:518px;width:1322px;height:1px;background:#ebebeb;"></div>
<div style="left:20px;top:535px;width:1322px;height:1px;background:#ebebeb;"></div>
<div style="left:20px;top:552px;width:1322px;height:1px;background:#ebebeb;"></div>
<div style="left:20px;top:569px;width:1322px;height:1px;background:#ebebeb;"></div>
<div style="left:20px;top:586px;width:1322px;height:1px;background:#ebebeb;"></div>
<div style="left:20px;top:603px;width:1322px;height:1px;background:#ebebeb;"></div>
<div style="left:20px;top:620px;width:1322px;height:1px;background:#ebebeb;"></div>
<div style="left:20px;top:637px;width:1322px;height:1px;background:#ebebeb;"></div>
<div style="left:20px;top:654px;width:1322px;height:1px;background:#ebebeb;"></div>
<div style="left:77px;top:213px;width:1px;height:455px;background:#ebebeb;"></div>
<div style="left:295px;top:213px;width:1px;height:455px;background:#ebebeb;"></div>
<div style="left:317px;top:213px;width:1px;height:455px;background:#ebebeb;"></div>
<div style="left:339px;top:213px;width:1px;height:455px;background:#ebebeb;"></div>
<div style="left:361px;top:213px;width:1px;height:455px;background:#ebebeb;"></div>
<div style="left:383px;top:213px;width:1px;height:455px;background:#ebebeb;"></div>
<div style="left:405px;top:213px;width:1px;height:455px;background:#ebebeb;"></div>
<div style="left:427px;top:213px;width:1px;height:455px;background:#ebebeb;"></div>
<div style="left:449px;top:213px;width:1px;height:455px;background:#ebebeb;"></div>
<div style="left:471px;top:213px;width:1px;height:455px;background:#ebebeb;"></div>
<div style="left:493px;top:213px;width:1px;height:455px;background:#ebebeb;"></div>
<div style="left:515px;top:213px;width:1px;height:455px;background:#ebebeb;"></div>
<div style="left:569px;top:213px;width:1px;height:455px;background:#ebebeb;"></div>
<div style="left:623px;top:213px;width:1px;height:455px;background:#ebebeb;"></div>
<div style="left:677px;top:213px;width:1px;height:455px;background:#ebebeb;"></div>
<div style="left:731px;top:213px;width:1px;height:455px;background:#ebebeb;"></div>
<div style="left:785px;top:213px;width:1px;height:455px;background:#ebebeb;"></div>
<div style="left:839px;top:213px;width:1px;height:455px;background:#ebebeb;"></div>
<div style="left:893px;top:213px;width:1px;height:455px;background:#ebebeb;"></div>
<div style="left:947px;top:213px;width:1px;height:455px;background:#ebebeb;"></div>
<div style="left:1001px;top:213px;width:1px;height:455px;background:#ebebeb;"></div>
<div style="left:1055px;top:213px;width:1px;height:455px;background:#ebebeb;"></div>
<div style="left:1109px;top:213px;width:1px;height:455px;background:#ebebeb;"></div>
<div style="left:1163px;top:213px;width:1px;height:455px;background:#ebebeb;"></div>
<div style="left:1217px;top:213px;width:1px;height:455px;background:#ebebeb;"></div>
<div style="left:1271px;top:213px;width:1px;height:455px;background:#ebebeb;"></div>
<div style="left:1325px;top:213px;width:1px;height:455px;background:#ebebeb;"></div>
<div style="left:296px;top:213px;width:219px;height:70px;background:#000;"></div>
<div style="left:295px;top:213px;width:1px;height:70px;background:#ebebeb;"></div>
<div style="left:317px;top:213px;width:1px;height:70px;background:#ebebeb;"></div>
<div style="left:339px;top:213px;width:1px;height:70px;background:#ebebeb;"></div>
<div style="left:361px;top:213px;width:1px;height:70px;background:#ebebeb;"></div>
<div style="left:383px;top:213px;width:1px;height:70px;background:#ebebeb;"></div>
<div style="left:405px;top:213px;width:1px;height:70px;background:#ebebeb;"></div>
<div style="left:427px;top:213px;width:1px;height:70px;background:#ebebeb;"></div>
<div style="left:449px;top:213px;width:1px;height:70px;background:#ebebeb;"></div>
<div style="left:471px;top:213px;width:1px;height:70px;background:#ebebeb;"></div>
<div style="left:493px;top:213px;width:1px;height:70px;background:#ebebeb;"></div>
<div style="left:515px;top:213px;width:1px;height:70px;background:#ebebeb;"></div>
<div style="left:20px;top:266px;width:275px;height:17px;background:#ffff00;"></div>
<div style="left:20px;top:283px;width:275px;height:1px;background:#707070;"></div>
<div class="t" style="left:22.5px;top:214px;font-size:13px;color:#fff;line-height:17px;transform-origin:0 0;transform:scaleX(0.9178);">Council:</div>
<div style="left:20px;top:231px;width:57px;height:17px;overflow:hidden;"><div class="t" style="left:2.5px;top:1px;font-size:13px;color:#fff;line-height:17px;transform-origin:0 0;transform:scaleX(0.9165);">Community:</div></div>
<div class="t" style="left:23px;top:250px;font-size:13px;color:#fff;line-height:17px;transform-origin:0 0;transform:scaleX(0.9646);font-weight:bold;">Troop:</div>
<div class="t" style="left:120px;top:216px;font-size:11.4px;color:#fff;line-height:14px;transform-origin:0 0;transform:scaleX(1.0157);">San Jacinto</div>
<div class="t" style="left:120px;top:234px;font-size:11.4px;color:#fff;line-height:14px;transform-origin:0 0;transform:scaleX(1.0907);">Top Flowing Trails</div>
<div class="t" style="left:120px;top:252px;font-size:11.4px;color:#fff;line-height:14px;transform-origin:0 0;transform:scaleX(0.9265);font-weight:bold;">8271</div>
<div class="t" style="left:118.4px;top:269px;font-size:11.4px;color:#ffffff;line-height:14px;transform-origin:0 0;transform:scaleX(0.8796);font-weight:bold;">Enter C for credit</div>
<div class="t" style="left:298.2px;top:280px;font-size:11.5px;line-height:14px;color:#fff;transform-origin:0 0;transform:rotate(-90deg) scaleX(0.7870);">Jaidynn</div>
<div class="t" style="left:320.2px;top:280px;font-size:11.5px;line-height:14px;color:#fff;transform-origin:0 0;transform:rotate(-90deg) scaleX(0.7895);">Samantha</div>
<div class="t" style="left:342.2px;top:280px;font-size:11.5px;line-height:14px;color:#fff;transform-origin:0 0;transform:rotate(-90deg) scaleX(0.8071);">Ella</div>
<div class="t" style="left:364.2px;top:280px;font-size:11.5px;line-height:14px;color:#fff;transform-origin:0 0;transform:rotate(-90deg) scaleX(0.8008);">Nayeli</div>
<div class="t" style="left:386.2px;top:280px;font-size:11.5px;line-height:14px;color:#fff;transform-origin:0 0;transform:rotate(-90deg) scaleX(0.7968);">Ashlynn</div>
<div class="t" style="left:408.2px;top:280px;font-size:11.5px;line-height:14px;color:#fff;transform-origin:0 0;transform:rotate(-90deg) scaleX(0.8186);">Mackenzie</div>
<div class="t" style="left:430.2px;top:280px;font-size:11.5px;line-height:14px;color:#fff;transform-origin:0 0;transform:rotate(-90deg) scaleX(0.7600);">Alex</div>
<div class="t" style="left:452.2px;top:280px;font-size:11.5px;line-height:14px;color:#fff;transform-origin:0 0;transform:rotate(-90deg) scaleX(0.8099);">Cadette 8</div>
<div class="t" style="left:474.2px;top:280px;font-size:11.5px;line-height:14px;color:#fff;transform-origin:0 0;transform:rotate(-90deg) scaleX(0.8099);">Cadette 9</div>
<div class="t" style="left:496.2px;top:280px;font-size:11.5px;line-height:14px;color:#fff;transform-origin:0 0;transform:rotate(-90deg) scaleX(0.8176);">Cadette 10</div>
<div style="left:20px;top:284px;width:275px;height:384px;overflow:hidden;">
<div class="t" style="left:60.3px;top:-3px;font-size:11.4px;color:#fff;line-height:14px;transform-origin:0 0;transform:scaleX(0.9826);">Interview at least five pet owners</div>
<div class="t" style="left:60.3px;top:14px;font-size:11.4px;color:#fff;line-height:14px;transform-origin:0 0;transform:scaleX(0.9418);">Check out how animals help people</div>
<div class="t" style="left:49.3px;top:14px;font-size:11.4px;color:#fff;line-height:14px;transform-origin:0 0;transform:scaleX(0.8693);">4</div>
<div class="t" style="left:60px;top:31px;font-size:11.4px;color:#fff;line-height:14px;transform-origin:0 0;transform:scaleX(0.9621);">Talk to someone who trains</div>
<div class="t" style="left:60.3px;top:48px;font-size:11.4px;color:#fff;line-height:14px;transform-origin:0 0;transform:scaleX(0.9537);">Speak to someone who has an</div>
<div class="t" style="left:60.9px;top:65px;font-size:11.4px;color:#fff;line-height:14px;transform-origin:0 0;transform:scaleX(0.9665);">Research the pros and cons of</div>
<div class="t" style="left:60.9px;top:82px;font-size:11.4px;color:#fff;line-height:14px;transform-origin:0 0;transform:scaleX(0.9342);">Look at how animals might help us</div>
<div class="t" style="left:49.6px;top:82px;font-size:11.4px;color:#fff;line-height:14px;transform-origin:0 0;transform:scaleX(0.8219);">5</div>
<div class="t" style="left:60.3px;top:99px;font-size:11.4px;color:#fff;line-height:14px;transform-origin:0 0;transform:scaleX(0.9636);">Get a sense of different animals'</div>
<div class="t" style="left:60px;top:116px;font-size:11.4px;color:#fff;line-height:14px;transform-origin:0 0;transform:scaleX(0.9438);">Talk to an animal expert at a zoo</div>
<div class="t" style="left:60.3px;top:133px;font-size:11.4px;color:#fff;line-height:14px;transform-origin:0 0;transform:scaleX(0.9484);">Practice being a scientist</div>
<div class="t" style="left:60.3px;top:186px;font-size:11.4px;color:#fff;line-height:14px;transform-origin:0 0;transform:scaleX(0.9562);">Get to know archery equipment</div>
<div class="t" style="left:50.3px;top:186px;font-size:11.4px;color:#fff;line-height:14px;transform-origin:0 0;transform:scaleX(0.5532);">1</div>
<div class="t" style="left:60.3px;top:203px;font-size:11.4px;color:#fff;line-height:14px;transform-origin:0 0;transform:scaleX(0.9592);">Visit an outdoor outfitter or a</div>
<div class="t" style="left:60.9px;top:220px;font-size:11.4px;color:#fff;line-height:14px;transform-origin:0 0;transform:scaleX(0.9481);">Invite an archery expert to talk to</div>
<div class="t" style="left:60.3px;top:237px;font-size:11.4px;color:#fff;line-height:14px;transform-origin:0 0;transform:scaleX(0.9713);">Work with an archery expert at a</div>
<div class="t" style="left:60.9px;top:254px;font-size:11.4px;color:#fff;line-height:14px;transform-origin:0 0;transform:scaleX(0.9732);">Learn about archery safety</div>
<div class="t" style="left:49.6px;top:254px;font-size:11.4px;color:#fff;line-height:14px;transform-origin:0 0;transform:scaleX(0.8219);">2</div>
<div class="t" style="left:60.3px;top:271px;font-size:11.4px;color:#fff;line-height:14px;transform-origin:0 0;transform:scaleX(0.9711);">Visit an archery range</div>
<div class="t" style="left:60.9px;top:288px;font-size:11.4px;color:#fff;line-height:14px;transform-origin:0 0;transform:scaleX(0.9481);">Invite an archery expert to talk to</div>
<div class="t" style="left:60px;top:305px;font-size:11.4px;color:#fff;line-height:14px;transform-origin:0 0;transform:scaleX(0.9701);">Take an archery workshop at a Girl</div>
<div class="t" style="left:60.3px;top:322px;font-size:11.4px;color:#fff;line-height:14px;transform-origin:0 0;transform:scaleX(0.9627);">Practice archery before you go on a</div>
<div class="t" style="left:49.6px;top:322px;font-size:11.4px;color:#fff;line-height:14px;transform-origin:0 0;transform:scaleX(0.8219);">3</div>
<div class="t" style="left:60.3px;top:339px;font-size:11.4px;color:#fff;line-height:14px;transform-origin:0 0;transform:scaleX(0.9674);">Work with an instructor or older girl</div>
<div class="t" style="left:60.3px;top:356px;font-size:11.4px;color:#fff;line-height:14px;transform-origin:0 0;transform:scaleX(0.9592);">Join an archery class at a</div>
<div class="t" style="left:60.3px;top:372px;font-size:11.4px;color:#fff;line-height:14px;transform-origin:0 0;transform:scaleX(0.9564);">Practice targetless shooting outdoors</div>
</div>
<svg style="left:289px;top:296px;" width="6.5" height="6.5" viewBox="0 0 6.5 6.5"><g transform="translate(0.5,0)"><path d="M0 0H5.500V5.500z" fill="#ff0000"/></g></svg>
<svg style="left:289px;top:313px;" width="6.5" height="6.5" viewBox="0 0 6.5 6.5"><g transform="translate(0.5,0)"><path d="M0 0H5.500V5.500z" fill="#ff0000"/></g></svg>
<svg style="left:289px;top:330px;" width="6.5" height="6.5" viewBox="0 0 6.5 6.5"><g transform="translate(0.5,0)"><path d="M0 0H5.500V5.500z" fill="#ff0000"/></g></svg>
<svg style="left:289px;top:347px;" width="6.5" height="6.5" viewBox="0 0 6.5 6.5"><g transform="translate(0.5,0)"><path d="M0 0H5.500V5.500z" fill="#ff0000"/></g></svg>
<svg style="left:289px;top:364px;" width="6.5" height="6.5" viewBox="0 0 6.5 6.5"><g transform="translate(0.5,0)"><path d="M0 0H5.500V5.500z" fill="#ff0000"/></g></svg>
<svg style="left:289px;top:381px;" width="6.5" height="6.5" viewBox="0 0 6.5 6.5"><g transform="translate(0.5,0)"><path d="M0 0H5.500V5.500z" fill="#ff0000"/></g></svg>
<svg style="left:289px;top:398px;" width="6.5" height="6.5" viewBox="0 0 6.5 6.5"><g transform="translate(0.5,0)"><path d="M0 0H5.500V5.500z" fill="#ff0000"/></g></svg>
<svg style="left:289px;top:415px;" width="6.5" height="6.5" viewBox="0 0 6.5 6.5"><g transform="translate(0.5,0)"><path d="M0 0H5.500V5.500z" fill="#ff0000"/></g></svg>
<svg style="left:289px;top:468px;" width="6.5" height="6.5" viewBox="0 0 6.5 6.5"><g transform="translate(0.5,0)"><path d="M0 0H5.500V5.500z" fill="#ff0000"/></g></svg>
<svg style="left:289px;top:485px;" width="6.5" height="6.5" viewBox="0 0 6.5 6.5"><g transform="translate(0.5,0)"><path d="M0 0H5.500V5.500z" fill="#ff0000"/></g></svg>
<svg style="left:289px;top:502px;" width="6.5" height="6.5" viewBox="0 0 6.5 6.5"><g transform="translate(0.5,0)"><path d="M0 0H5.500V5.500z" fill="#ff0000"/></g></svg>
<svg style="left:289px;top:519px;" width="6.5" height="6.5" viewBox="0 0 6.5 6.5"><g transform="translate(0.5,0)"><path d="M0 0H5.500V5.500z" fill="#ff0000"/></g></svg>
<svg style="left:289px;top:536px;" width="6.5" height="6.5" viewBox="0 0 6.5 6.5"><g transform="translate(0.5,0)"><path d="M0 0H5.500V5.500z" fill="#ff0000"/></g></svg>
<svg style="left:289px;top:553px;" width="6.5" height="6.5" viewBox="0 0 6.5 6.5"><g transform="translate(0.5,0)"><path d="M0 0H5.500V5.500z" fill="#ff0000"/></g></svg>
<svg style="left:289px;top:570px;" width="6.5" height="6.5" viewBox="0 0 6.5 6.5"><g transform="translate(0.5,0)"><path d="M0 0H5.500V5.500z" fill="#ff0000"/></g></svg>
<svg style="left:289px;top:587px;" width="6.5" height="6.5" viewBox="0 0 6.5 6.5"><g transform="translate(0.5,0)"><path d="M0 0H5.500V5.500z" fill="#ff0000"/></g></svg>
<svg style="left:289px;top:604px;" width="6.5" height="6.5" viewBox="0 0 6.5 6.5"><g transform="translate(0.5,0)"><path d="M0 0H5.500V5.500z" fill="#ff0000"/></g></svg>
<svg style="left:289px;top:621px;" width="6.5" height="6.5" viewBox="0 0 6.5 6.5"><g transform="translate(0.5,0)"><path d="M0 0H5.500V5.500z" fill="#ff0000"/></g></svg>
<svg style="left:289px;top:638px;" width="6.5" height="6.5" viewBox="0 0 6.5 6.5"><g transform="translate(0.5,0)"><path d="M0 0H5.500V5.500z" fill="#ff0000"/></g></svg>
<svg style="left:289px;top:655px;" width="6.5" height="6.5" viewBox="0 0 6.5 6.5"><g transform="translate(0.5,0)"><path d="M0 0H5.500V5.500z" fill="#ff0000"/></g></svg>
<div class="t" style="left:106.3px;top:435px;font-size:11.4px;color:#fff;line-height:14px;transform-origin:0 0;transform:scaleX(0.9975);font-weight:bold;">Status: (P)artial or (C)omplete</div>
<div class="t" style="left:22.5px;top:452px;font-size:11.8px;color:#fff;line-height:16px;transform-origin:0 0;transform:scaleX(0.9752);font-weight:bold;">Archery</div>
<div style="left:294px;top:431px;width:222px;height:2px;background:#fff;"></div>
<div style="left:294px;top:449px;width:222px;height:2px;background:#fff;"></div>
<div style="left:294px;top:431px;width:2px;height:20px;background:#fff;"></div>
<div style="left:316px;top:431px;width:2px;height:20px;background:#fff;"></div>
<div style="left:338px;top:431px;width:2px;height:20px;background:#fff;"></div>
<div style="left:360px;top:431px;width:2px;height:20px;background:#fff;"></div>
<div style="left:382px;top:431px;width:2px;height:20px;background:#fff;"></div>
<div style="left:404px;top:431px;width:2px;height:20px;background:#fff;"></div>
<div style="left:426px;top:431px;width:2px;height:20px;background:#fff;"></div>
<div style="left:448px;top:431px;width:2px;height:20px;background:#fff;"></div>
<div style="left:470px;top:431px;width:2px;height:20px;background:#fff;"></div>
<div style="left:492px;top:431px;width:2px;height:20px;background:#fff;"></div>
<div style="left:514px;top:431px;width:2px;height:20px;background:#fff;"></div>
<div style="left:1342px;top:197px;width:21px;height:471px;background:#e9e9e9;"></div>
<div style="left:1345px;top:236px;width:15px;height:417px;background:#d9d9d9;"></div>
<div style="left:1345px;top:199px;width:15px;height:15px;background:#fff;border:1px solid #707070;"></div>
<svg style="left:1348px;top:204px;" width="9" height="6" viewBox="0 0 9 6"><g transform="translate(0.5,0)"><path d="M0.300 4.500h7.400L4 0.500z" fill="#606060"/></g></svg>
<div style="left:1345px;top:219px;width:15px;height:17px;background:#fff;border:1px solid #707070;"></div>
<div style="left:1345px;top:653px;width:15px;height:15px;background:#fff;border:1px solid #707070;"></div>
<svg style="left:1348px;top:658px;" width="9" height="6" viewBox="0 0 9 6"><g transform="translate(0.5,0.5)"><path d="M0.300 0.500h7.400L4 4.500z" fill="#606060"/></g></svg>
<div style="left:0px;top:668px;width:1363px;height:28px;background:#e6e6e6;"></div>
<div style="left:0px;top:696px;width:1363px;height:1px;background:#c6c6c6;"></div>
<svg style="left:23px;top:677px;" width="7" height="10" viewBox="0 0 7 10"><path d="M6 1L1 5l5 4z" fill="#c8c8c8"/></svg>
<svg style="left:52px;top:677px;" width="7" height="10" viewBox="0 0 7 10"><path d="M1 1l5 4l-5 4z" fill="#c8c8c8"/></svg>
<div style="left:97px;top:671px;width:1px;height:22px;background:#a6a6a6;"></div>
<div class="t" style="left:109.3px;top:674px;font-size:12.3px;color:#444;line-height:16px;transform-origin:0 0;transform:scaleX(1.0339);">ReadMe!</div>
<div style="left:174px;top:671px;width:1px;height:22px;background:#c6c6c6;"></div>
<div style="left:177px;top:671px;width:66px;height:22px;background:#ff0000;"></div>
<div class="t" style="left:187.6px;top:674px;font-size:12.3px;color:#fff;line-height:16px;transform-origin:0 0;transform:scaleX(0.9999);">Contact</div>
<div style="left:245px;top:671px;width:1px;height:22px;background:#c6c6c6;"></div>
<div style="left:248px;top:671px;width:89px;height:22px;background:#ffc000;"></div>
<div class="t" style="left:259.4px;top:674px;font-size:12.3px;color:#1a1a1a;line-height:16px;transform-origin:0 0;transform:scaleX(1.0299);">Attendance</div>
<div style="left:340px;top:668px;width:127px;height:25px;background:#fff;"></div>
<div style="left:342px;top:670px;width:123px;height:21px;background:linear-gradient(#ffffff 0%,#fde9e9 40%,#f49a9a 100%);"></div>
<div style="left:340px;top:691px;width:127px;height:2px;background:#217346;"></div>
<div style="left:339px;top:668px;width:1px;height:25px;background:#c6c6c6;"></div>
<div style="left:467px;top:668px;width:1px;height:25px;background:#c6c6c6;"></div>
<div class="t" style="left:351.7px;top:674px;font-size:12.3px;color:#217346;line-height:16px;transform-origin:0 0;transform:scaleX(1.0563);font-weight:bold;">Cadette Detailed</div>
<div style="left:469px;top:671px;width:72px;height:22px;background:#ff0000;"></div>
<div class="t" style="left:479.3px;top:674px;font-size:12.3px;color:#fff;line-height:16px;transform-origin:0 0;transform:scaleX(1.0197);">Cadettes</div>
<div style="left:543px;top:671px;width:1px;height:22px;background:#c6c6c6;"></div>
<div style="left:546px;top:671px;width:37px;height:22px;background:#ff0000;"></div>
<div class="t" style="left:555.3px;top:674px;font-size:12.3px;color:#fff;line-height:16px;transform-origin:0 0;transform:scaleX(0.9254);">C 1</div>
<div style="left:585px;top:671px;width:1px;height:22px;background:#a6a6a6;"></div>
<svg style="left:618px;top:673px;" width="18" height="18" viewBox="0 0 18 18"><circle cx="8.700" cy="8.700" r="7.300" fill="none" stroke="#6e6e6e" stroke-width="1.100"/><path d="M8.700 5.200v7M5.200 8.700h7" stroke="#6e6e6e" stroke-width="1.700"/></svg>
<div style="left:815px;top:677px;width:2px;height:2px;background:#9e9e9e;"></div>
<div style="left:815px;top:681px;width:2px;height:2px;background:#9e9e9e;"></div>
<div style="left:815px;top:685px;width:2px;height:2px;background:#9e9e9e;"></div>
<div style="left:832px;top:675px;width:15px;height:15px;background:#fff;border:1px solid #707070;"></div>
<svg style="left:836px;top:678px;" width="7" height="9" viewBox="0 0 7 9"><g transform="translate(0.5,0.5)"><path d="M5 0.300v7.400L0.800 4z" fill="#606060"/></g></svg>
<div style="left:1303px;top:675px;width:21px;height:15px;background:#d9d9d9;"></div>
<div style="left:846px;top:675px;width:457px;height:15px;background:#fff;border:1px solid #707070;"></div>
<div style="left:1324px;top:675px;width:15px;height:15px;background:#fff;border:1px solid #707070;"></div>
<svg style="left:1328px;top:678px;" width="7" height="9" viewBox="0 0 7 9"><g transform="translate(0.5,0.5)"><path d="M1 0.300v7.400L5.200 4z" fill="#606060"/></g></svg>
<div style="left:0px;top:697px;width:1363px;height:21px;background:#f3f2f1;"></div>
<div class="t" style="left:4.75px;top:701px;font-size:11px;color:#3b3a39;line-height:14px;transform-origin:0 0;transform:scaleX(0.9421);">Ready</div>
<svg style="left:55px;top:701px;" width="15" height="13" viewBox="0 0 15 13"><rect x="0.500" y="0.500" width="13" height="11" fill="none" stroke="#3b3a39" stroke-width="1"/><path d="M0.500 3.500h13M2.500 6h3M2.500 8.500h3" stroke="#3b3a39" stroke-width="1"/><circle cx="10" cy="8.500" r="3" fill="#f3f2f1" stroke="#3b3a39" stroke-width="1"/><circle cx="10" cy="8.500" r="1.200" fill="#3b3a39"/></svg>
<svg style="left:87px;top:700px;" width="15" height="14" viewBox="0 0 15 14"><circle cx="6.500" cy="2.300" r="1.800" fill="none" stroke="#3b3a39" stroke-width="1"/><path d="M0.800 4.500l4 1.300v3l-2.300 4.200M12 4.500l-4 1.300v3l1 1.500M6.500 9l-.5 1.500M8.500 9l5 4.500M13.500 9l-5 4.500" fill="none" stroke="#3b3a39" stroke-width="1"/></svg>
<div class="t" style="left:105.3px;top:701px;font-size:11px;color:#3b3a39;line-height:14px;transform-origin:0 0;transform:scaleX(1.0225);">Accessibility: Investigate</div>
<div style="left:1063px;top:697px;width:40px;height:21px;background:#c8c6c4;"></div>
<svg style="left:1076px;top:700px;" width="14" height="14" viewBox="0 0 14 14"><path d="M0.500 0.500h12v12h-12zM4.500 0.500v12M8.500 0.500v12M0.500 4.500h12M0.500 8.500h12" fill="none" stroke="#3b3a39" stroke-width="1"/></svg>
<svg style="left:1116px;top:700px;" width="15" height="14" viewBox="0 0 15 14"><rect x="0.500" y="0.500" width="13" height="12" fill="none" stroke="#3b3a39" stroke-width="1"/><rect x="3.500" y="3.500" width="7" height="6" fill="none" stroke="#3b3a39" stroke-width="1"/><path d="M5 5.500h4M5 7.500h4" stroke="#3b3a39" stroke-width="0.800"/></svg>
<svg style="left:1155px;top:700px;" width="16" height="14" viewBox="0 0 16 14"><path d="M0.500 0.500h13v12h-13zM0.500 6.500h13M4.500 0.500v6M8.500 0.500v6" fill="none" stroke="#3b3a39" stroke-width="1"/></svg>
<div style="left:1189px;top:706px;width:8px;height:1px;background:#3b3a39;"></div>
<div style="left:1202px;top:706px;width:100px;height:1px;background:#3b3a39;"></div>
<div style="left:1242px;top:702px;width:5px;height:11px;background:#3b3a39;"></div>
<div style="left:1252px;top:704px;width:1px;height:5px;background:#3b3a39;"></div>
<div style="left:1307px;top:706px;width:8px;height:1px;background:#3b3a39;"></div>
<div style="left:1310.5px;top:702.5px;width:1px;height:8px;background:#3b3a39;"></div>
<div class="t" style="left:1328px;top:701px;font-size:11px;color:#3b3a39;line-height:14px;transform-origin:0 0;transform:scaleX(0.9534);">85%</div>
<div style="left:0px;top:718px;width:1363px;height:40px;background:#eeeeee;"></div>
<svg style="left:12px;top:730px;" width="18" height="18" viewBox="0 0 18 18"><path d="M0.800 2.300L7.100 1.500V8.200H0.800zM8 1.400L17.300 0.300V8.200H8zM0.800 9.200H7.100V15.900L0.800 15.100zM8 9.200H17.300V17.200L8 16z" fill="#000"/></svg>
<div style="left:45px;top:718px;width:344px;height:40px;background:#fff;border:1px solid #bdbdbd;"></div>
<svg style="left:55px;top:727px;" width="22" height="22" viewBox="0 0 22 22"><circle cx="12.500" cy="8.500" r="5" fill="none" stroke="#111" stroke-width="1.300"/><path d="M9 12L2.200 18.700" stroke="#111" stroke-width="1.400"/></svg>
<div class="t" style="left:85.1px;top:730px;font-size:14.4px;color:#2b2b2b;line-height:18px;transform-origin:0 0;transform:scaleX(1.0011);">Type here to search</div>
<svg style="left:310px;top:719px;" width="78" height="39" viewBox="0 0 78 39"><rect x="0" y="0" width="78" height="39" fill="#fff"/><path d="M18 39C26 31 54 31 62 39z" fill="#aab98f"/><path d="M24 39C30 35 48 35 54 39z" fill="#c5cfb2"/><rect x="6.4" y="0" width="3.7" height="39" fill="#a9cb14"/><rect x="8.44" y="0" width="1.67" height="39" fill="#86a90f"/><rect x="6.4" y="10.800000000000004" width="3.7" height="1" fill="#dfe9a0"/><rect x="6.4" y="19.800000000000004" width="3.7" height="1" fill="#dfe9a0"/><rect x="6.4" y="28.800000000000004" width="3.7" height="1" fill="#dfe9a0"/><rect x="6.4" y="37.800000000000004" width="3.7" height="1" fill="#dfe9a0"/><rect x="12.3" y="0" width="3.4" height="39" fill="#a9cb14"/><rect x="14.17" y="0" width="1.53" height="39" fill="#86a90f"/><rect x="12.3" y="7.1000000000000085" width="3.4" height="1" fill="#dfe9a0"/><rect x="12.3" y="16.10000000000001" width="3.4" height="1" fill="#dfe9a0"/><rect x="12.3" y="25.10000000000001" width="3.4" height="1" fill="#dfe9a0"/><rect x="12.3" y="34.10000000000001" width="3.4" height="1" fill="#dfe9a0"/><rect x="18.1" y="0" width="3" height="39" fill="#a9cb14"/><rect x="19.75" y="0" width="1.35" height="39" fill="#86a90f"/><rect x="18.1" y="7.700000000000017" width="3" height="1" fill="#dfe9a0"/><rect x="18.1" y="16.700000000000017" width="3" height="1" fill="#dfe9a0"/><rect x="18.1" y="25.700000000000017" width="3" height="1" fill="#dfe9a0"/><rect x="18.1" y="34.70000000000002" width="3" height="1" fill="#dfe9a0"/><rect x="22.5" y="0" width="3" height="39" fill="#a9cb14"/><rect x="24.15" y="0" width="1.35" height="39" fill="#86a90f"/><rect x="22.5" y="8.5" width="3" height="1" fill="#dfe9a0"/><rect x="22.5" y="17.5" width="3" height="1" fill="#dfe9a0"/><rect x="22.5" y="26.5" width="3" height="1" fill="#dfe9a0"/><rect x="22.5" y="35.5" width="3" height="1" fill="#dfe9a0"/><rect x="27.3" y="0" width="2.1" height="39" fill="#a9cb14"/><rect x="28.46" y="0" width="0.95" height="39" fill="#86a90f"/><rect x="27.3" y="7.099999999999994" width="2.1" height="1" fill="#dfe9a0"/><rect x="27.3" y="16.099999999999994" width="2.1" height="1" fill="#dfe9a0"/><rect x="27.3" y="25.099999999999994" width="2.1" height="1" fill="#dfe9a0"/><rect x="27.3" y="34.099999999999994" width="2.1" height="1" fill="#dfe9a0"/><rect x="49.7" y="0" width="2.2" height="39" fill="#a9cb14"/><rect x="50.91" y="0" width="0.99" height="39" fill="#86a90f"/><rect x="49.7" y="8.900000000000034" width="2.2" height="1" fill="#dfe9a0"/><rect x="49.7" y="17.900000000000034" width="2.2" height="1" fill="#dfe9a0"/><rect x="49.7" y="26.900000000000034" width="2.2" height="1" fill="#dfe9a0"/><rect x="49.7" y="35.900000000000034" width="2.2" height="1" fill="#dfe9a0"/><rect x="54" y="0" width="2.7" height="39" fill="#a9cb14"/><rect x="55.48" y="0" width="1.22" height="39" fill="#86a90f"/><rect x="54" y="9" width="2.7" height="1" fill="#dfe9a0"/><rect x="54" y="18" width="2.7" height="1" fill="#dfe9a0"/><rect x="54" y="27" width="2.7" height="1" fill="#dfe9a0"/><rect x="54" y="36" width="2.7" height="1" fill="#dfe9a0"/><rect x="59.2" y="0" width="3.4" height="39" fill="#a9cb14"/><rect x="61.07" y="0" width="1.53" height="39" fill="#86a90f"/><rect x="59.2" y="10.400000000000034" width="3.4" height="1" fill="#dfe9a0"/><rect x="59.2" y="19.400000000000034" width="3.4" height="1" fill="#dfe9a0"/><rect x="59.2" y="28.400000000000034" width="3.4" height="1" fill="#dfe9a0"/><rect x="59.2" y="37.400000000000034" width="3.4" height="1" fill="#dfe9a0"/><rect x="64.6" y="0" width="3.8" height="39" fill="#a9cb14"/><rect x="66.69" y="0" width="1.71" height="39" fill="#86a90f"/><rect x="64.6" y="8.199999999999932" width="3.8" height="1" fill="#dfe9a0"/><rect x="64.6" y="17.199999999999932" width="3.8" height="1" fill="#dfe9a0"/><rect x="64.6" y="26.199999999999932" width="3.8" height="1" fill="#dfe9a0"/><rect x="64.6" y="35.19999999999993" width="3.8" height="1" fill="#dfe9a0"/><rect x="70.6" y="0" width="4" height="39" fill="#a9cb14"/><rect x="72.8" y="0" width="1.8" height="39" fill="#86a90f"/><rect x="70.6" y="10.199999999999932" width="4" height="1" fill="#dfe9a0"/><rect x="70.6" y="19.199999999999932" width="4" height="1" fill="#dfe9a0"/><rect x="70.6" y="28.199999999999932" width="4" height="1" fill="#dfe9a0"/><rect x="70.6" y="37.19999999999993" width="4" height="1" fill="#dfe9a0"/><path d="M0 7l6 4l-6 3zM6 9l-5-5M30 20l-4 3M48 19l6-3l-2 5M72 14l6-4v6z" fill="#8fb512" stroke="#8fb512"/><path d="M28.300 16.500h21.500v2.300h-21.500z" fill="#6b563d"/><rect x="32" y="18.800" width="2.400" height="15" fill="#4d3b27"/><rect x="44" y="18.800" width="2.600" height="15" fill="#4d3b27"/><path d="M32 23.500h14.500" stroke="#d6c9a0" stroke-width="1.200"/><circle cx="33.500" cy="10" r="2" fill="#f6a800"/><circle cx="2.500" cy="28" r="1.900" fill="#7fd0f5"/><path d="M42.500 1l1.300 3l3 .8l-2.700 1.700l-.6 3.300l-2-2.600l-3.200.4l2-2.600l-1.200-3z" fill="#e071e6"/></svg>
<svg style="left:404px;top:729px;" width="18" height="18" viewBox="0 0 18 18"><circle cx="9" cy="9" r="6.700" fill="none" stroke="#000" stroke-width="2"/></svg>
<svg style="left:452px;top:729px;" width="18" height="17" viewBox="0 0 18 17"><path d="M1 1.500h10.500M1 15.500h10.500M2 4.500h8.500v8h-8.500z" fill="none" stroke="#000" stroke-width="1.300"/><path d="M15.500 1v3M15.500 9v7" stroke="#000" stroke-width="1.300"/><rect x="14.200" y="5" width="2.600" height="2.600" fill="#000"/></svg>
<svg style="left:499px;top:726px;" width="25" height="25" viewBox="0 0 25 25"><circle cx="12.500" cy="12.500" r="12" fill="#1f7fd4"/><path d="M12.500 0.500a12 12 0 0 1 12 12c0 4-3 5.500-6 5.500c-3 0-4.500-2-4-3.500c1-2-1-5-4.500-5c-4 0-7 2-9 4.500A12 12 0 0 1 12.500 0.500z" fill="#35c1b1"/><path d="M17 3a12 12 0 0 1 7.500 9.500c0 4-3 5.500-6 5.500c-2 0-3-1-3.500-2c3-1 5-7 2-13z" fill="#5fd35a"/><path d="M14.500 14.500c-.5 1.500 1 3.500 4 3.500c1.500 0 3-.5 4-1.500c-1.500 5-6 8-10 8c-4-1-6-4-6-7c0-4 3-6 5.500-6c2 0 3 1.500 2.500 3z" fill="#0c59a4"/><path d="M14.500 13c-.5 2 1 5 4 5c-2 1.500-6 .5-6.500-2.500c0-1.500 1.500-3 2.500-2.500z" fill="#eeeeee"/></svg>
<svg style="left:550px;top:728px;" width="22" height="20" viewBox="0 0 22 20"><path d="M0 1.500h7l1.500 2H0z" fill="#e5a50c"/><rect x="0" y="3.500" width="21.500" height="15" fill="#fcd462"/><path d="M3.500 18.500v-7h14.500v7h-4v-3.500h-6.500v3.500z" fill="#3b8fdb"/><rect x="3.500" y="10" width="14.500" height="2" fill="#2566b0"/></svg>
<svg style="left:597px;top:727px;" width="26" height="22" viewBox="0 0 26 22"><rect x="7" y="0.500" width="17" height="14" fill="#1a80d9"/><rect x="15" y="0.500" width="9" height="7" fill="#0f5fb5"/><path d="M7 9l8.500 6l8.500-6v12h-17z" fill="#1490df"/><path d="M7 21l17-8v8z" fill="#0d6fc4"/><rect x="0" y="5" width="13" height="13" rx="1" fill="#0f65c0"/><circle cx="6.500" cy="11.500" r="3" fill="none" stroke="#fff" stroke-width="1.800"/></svg>
<svg style="left:646px;top:726px;" width="25" height="24" viewBox="0 0 25 24"><path d="M0.500 9.500L12.500 0.500l12 9v13h-24z" fill="#0f5fb5"/><path d="M3 9h19v8H3z" fill="#fff"/><path d="M0.500 9.500l12 8.500l12-8.500v13h-24z" fill="#28a8ea"/><path d="M0.500 22.500l12-8l12 8z" fill="#1b8fdc"/></svg>
<svg style="left:695px;top:727px;" width="26" height="22" viewBox="0 0 26 22"><rect x="6" y="0.500" width="18" height="21" fill="#b661d6"/><rect x="18" y="0.500" width="6" height="7" fill="#c983e4"/><rect x="18" y="7.500" width="6" height="7" fill="#9a3fbe"/><rect x="18" y="14.500" width="6" height="7" fill="#7c24a3"/><rect x="0" y="4.500" width="13" height="13" rx="1" fill="#7a1ea1"/><path d="M4 14.500v-7l5 7v-7" fill="none" stroke="#fff" stroke-width="1.700"/></svg>
<svg style="left:744px;top:727px;" width="26" height="22" viewBox="0 0 26 22"><rect x="6" y="0.500" width="18" height="21" rx="1" fill="#1f9b5c"/><rect x="15" y="0.500" width="9" height="5.500" fill="#33c481"/><rect x="6" y="6" width="9" height="5" fill="#107c41"/><rect x="15" y="11" width="9" height="5" fill="#107c41"/><rect x="6" y="16" width="18" height="5.500" fill="#185c37"/><rect x="0" y="4.500" width="13" height="13" rx="1" fill="#107c41"/><path d="M3.500 7.500l6 7M9.500 7.500l-6 7" stroke="#fff" stroke-width="1.700"/></svg>
<div style="left:794px;top:726px;width:24px;height:24px;background:#1a9ad7;"></div>
<svg style="left:799px;top:731px;" width="14" height="14" viewBox="0 0 14 14"><rect x="3.500" y="0.500" width="7" height="4" fill="none" stroke="#fff" stroke-width="1"/><rect x="1" y="4.500" width="12" height="5" fill="none" stroke="#fff" stroke-width="1"/><rect x="3" y="7" width="5" height="5.500" fill="#1a9ad7" stroke="#fff" stroke-width="1"/><rect x="9" y="6.500" width="3" height="6.500" fill="#1a9ad7" stroke="#fff" stroke-width="1"/></svg>
<svg style="left:843px;top:727px;" width="24" height="23" viewBox="0 0 24 23"><path d="M2 0.500h19l-1 15H3z" fill="#6a7fb5"/><path d="M4 2.500h15l-.8 11H4.800z" fill="#2f49c9"/><path d="M6 6h10v5H6z" fill="#fff" opacity=".85"/><path d="M7.500 8.500l2 2l3.500-4" stroke="#2f49c9" stroke-width="1.200" fill="none"/><path d="M8 15.500h7l1 4H7z" fill="#c9c9c9"/><ellipse cx="11.500" cy="20.500" rx="7" ry="2" fill="#d5d5d5"/></svg>
<svg style="left:893px;top:728px;" width="20" height="20" viewBox="0 0 20 20"><circle cx="10" cy="10" r="5.200" fill="none" stroke="#333" stroke-width="3.200"/><g stroke="#333" stroke-width="3.400"><path d="M10 0.500v3.500M10 16v3.500M0.500 10h3.500M16 10h3.500M3.300 3.300l2.500 2.500M14.200 14.200l2.500 2.500M3.300 16.700l2.500-2.500M14.200 5.800l2.500-2.500"/></g></svg>
<div style="left:929px;top:718px;width:48px;height:40px;background:#f9f9f9;"></div>
<svg style="left:942px;top:726px;" width="24" height="26" viewBox="0 0 24 26"><path d="M5 4A10 10 0 1 1 12 22" fill="none" stroke="#d24a1e" stroke-width="3"/><path d="M12 4l-5 14M10 6l6 12" stroke="#9a9a9a" stroke-width="2.200"/><path d="M11 3l3 12l3-5z" fill="#c9c9c9"/><circle cx="6" cy="20.500" r="2.500" fill="none" stroke="#1976d2" stroke-width="1.800"/><circle cx="15" cy="21.500" r="2.500" fill="none" stroke="#1976d2" stroke-width="1.800"/></svg>
<div style="left:492px;top:756px;width:40px;height:2px;background:#e8105f;"></div>
<div style="left:541px;top:756px;width:40px;height:2px;background:#e8105f;"></div>
<div style="left:737px;top:756px;width:40px;height:2px;background:#e8105f;"></div>
<div style="left:835px;top:756px;width:40px;height:2px;background:#e8105f;"></div>
<div style="left:884px;top:756px;width:40px;height:2px;background:#e8105f;"></div>
<div style="left:929px;top:756px;width:48px;height:2px;background:#e8105f;"></div>
<svg style="left:1016px;top:728px;" width="26" height="26" viewBox="0 0 26 26"><circle cx="17" cy="9" r="6" fill="#f9b72b"/><path d="M4 17a4.500 4.500 0 0 1 2-8.500a6 6 0 0 1 11.500 1.500a3.800 3.800 0 0 1 0 7.500z" fill="#d9dde3"/><path d="M4 17a4.500 4.500 0 0 1 1-6c3 3 9 4 14 3.500a3.800 3.800 0 0 1-1.500 2.500z" fill="#b9c0ca"/><circle cx="19.500" cy="19" r="3.200" fill="#e8103c"/></svg>
<div class="t" style="left:1046.5px;top:731px;font-size:14.4px;color:#111;line-height:18px;transform-origin:0 0;transform:scaleX(0.8834);">84°F</div>
<svg style="left:1095px;top:733px;" width="14" height="9" viewBox="0 0 14 9"><path d="M1.500 7.500l5.500-5.500l5.500 5.500" fill="none" stroke="#111" stroke-width="1.500"/></svg>
<svg style="left:1125px;top:730px;" width="18" height="14" viewBox="0 0 18 14"><path d="M4.500 12.500a3.500 3.500 0 0 1 0-7a5 5 0 0 1 9.500 1a3 3 0 0 1 0 6z" fill="#8c8c8c" stroke="#222" stroke-width="1.400"/></svg>
<svg style="left:1158px;top:732px;" width="18" height="12" viewBox="0 0 18 12"><rect x="4" y="2.500" width="11" height="8" fill="none" stroke="#fff" stroke-width="1.200"/><path d="M1 4v4M2.500 3v6" stroke="#fff" stroke-width="1"/></svg>
<svg style="left:1192px;top:731px;" width="16" height="14" viewBox="0 0 16 14"><path d="M2 12a10 10 0 0 1 10-10M5 12a7 7 0 0 1 7-7M8 12a4 4 0 0 1 4-4" fill="none" stroke="#d4d4d4" stroke-width="1"/></svg>
<svg style="left:1222px;top:730px;" width="18" height="16" viewBox="0 0 18 16"><path d="M1 6h3l4-4v12l-4-4H1z" fill="none" stroke="#fff" stroke-width="1"/><path d="M11 4a5 5 0 0 1 0 8M13.500 2a8 8 0 0 1 0 12" fill="none" stroke="#d8d8d8" stroke-width="1"/></svg>
<div class="t" style="left:1253.5px;top:721px;font-size:12px;color:#111;line-height:16px;transform-origin:0 0;transform:scaleX(0.9699);">11:40 AM</div>
<div class="t" style="left:1252.2px;top:739px;font-size:12px;color:#111;line-height:16px;transform-origin:0 0;transform:scaleX(0.9625);">9/18/2022</div>
<svg style="left:1322px;top:730px;" width="17" height="13" viewBox="0 0 17 13"><path d="M0 0h16.200v12.800h-16.200z" fill="#fff"/><path d="M3 3.500h10M3 6h10M3 8.500h8" stroke="#f3f3f3" stroke-width="1"/></svg>
<svg style="left:1329px;top:736px;" width="18" height="18" viewBox="0 0 18 18"><circle cx="8.500" cy="9" r="7.800" fill="#d8d8d8" stroke="#8a8a8a" stroke-width="1"/></svg>
<div class="t" style="left:1334.3px;top:738px;font-size:11.5px;color:#111;line-height:14px;transform-origin:0 0;transform:scaleX(0.9244);">5</div>
<div style="left:1358px;top:718px;width:1px;height:40px;background:#bdbdbd;"></div>
<div style="left:692px;top:29px;width:644px;height:512px;background:#fff;border:1px solid #8f8f8f;box-shadow:0 3px 12px 1px rgba(0,0,0,0.28);"></div>
<svg style="left:701px;top:36px;" width="17" height="15" viewBox="0 0 17 15"><path d="M0.500 1h6.500l1.500 2H0.500z" fill="#e5a50c"/><rect x="0.500" y="3" width="15.500" height="11" fill="#fcd462"/><path d="M3 14v-6h10.500v6h-3v-3h-4.500v3z" fill="#3b8fdb"/><rect x="3" y="7" width="10.500" height="1.700" fill="#2566b0"/></svg>
<div class="t" style="left:721.7px;top:37px;font-size:12.2px;color:#7a7a7a;line-height:16px;transform-origin:0 0;transform:scaleX(0.9215);">File Explorer</div>
<div style="left:1216.5px;top:44px;width:9.5px;height:1px;background:#555;"></div>
<div style="left:1261px;top:39.5px;width:10px;height:10px;border:1px solid #555;"></div>
<svg style="left:1306px;top:39px;" width="12" height="12" viewBox="0 0 12 12"><g transform="translate(0.5,0)"><path d="M0.500 0.500l10 10M10.500 0.500l-10 10" stroke="#555" stroke-width="1"/></g></svg>
<div style="left:694px;top:61px;width:641px;height:139px;background:#000;"></div>
<div style="left:694px;top:61px;width:55px;height:22px;background:#000;border:1px solid #7a7a7a;border-left:none;border-top:none;"></div>
<div class="t" style="left:712.4px;top:64px;font-size:12.2px;color:#fff;line-height:16px;transform-origin:0 0;transform:scaleX(0.8642);">File</div>
<div style="left:750px;top:61px;width:56px;height:23px;background:#1cebfb;"></div>
<div class="t" style="left:763.6px;top:64px;font-size:12.2px;color:#000;line-height:16px;transform-origin:0 0;transform:scaleX(0.8819);">Home</div>
<div class="t" style="left:822.2px;top:64px;font-size:12.2px;color:#fff;line-height:16px;transform-origin:0 0;transform:scaleX(0.8819);">Share</div>
<div class="t" style="left:880.3px;top:64px;font-size:12.2px;color:#fff;line-height:16px;transform-origin:0 0;transform:scaleX(0.9215);">View</div>
<div style="left:806px;top:83px;width:529px;height:1px;background:#8a8a8a;"></div>
<svg style="left:1296px;top:67px;" width="13" height="8" viewBox="0 0 13 8"><g transform="translate(0.3,0.4)"><path d="M1 5.2L5.65 1L10.3 5.2" fill="none" stroke="#e6e6e6" stroke-width="2"/></g></svg>
<div style="left:1316.8px;top:63px;width:15.5px;height:15.5px;background:#0a64d8;border-radius:9px;border:1px solid #4d98f0;"></div>
<div class="t" style="left:1321.3px;top:64px;font-size:12.5px;color:#fff;line-height:16px;transform-origin:0 0;transform:scaleX(0.8525);font-weight:bold;">?</div>
<div style="left:697px;top:86px;width:182px;height:89px;border:1px solid #8a8a8a;"></div>
<div style="left:701px;top:158px;width:174px;height:1px;background:#8a8a8a;"></div>
<div class="t" style="left:760.6px;top:158px;font-size:12.2px;color:#fff;line-height:16px;transform-origin:0 0;transform:scaleX(0.9556);">Clipboard</div>
<div style="left:882px;top:86px;width:162px;height:89px;border:1px solid #8a8a8a;"></div>
<div style="left:886px;top:158px;width:154px;height:1px;background:#8a8a8a;"></div>
<div class="t" style="left:936.4px;top:158px;font-size:12.2px;color:#fff;line-height:16px;transform-origin:0 0;transform:scaleX(0.9272);">Organize</div>
<div style="left:1046px;top:86px;width:81px;height:89px;border:1px solid #8a8a8a;"></div>
<div style="left:1050px;top:158px;width:73px;height:1px;background:#8a8a8a;"></div>
<div class="t" style="left:1072.4px;top:158px;font-size:12.2px;color:#fff;line-height:16px;transform-origin:0 0;transform:scaleX(0.8841);">New</div>
<div style="left:1129px;top:86px;width:98px;height:89px;border:1px solid #8a8a8a;"></div>
<div style="left:1133px;top:158px;width:90px;height:1px;background:#8a8a8a;"></div>
<div class="t" style="left:1161.6px;top:158px;font-size:12.2px;color:#fff;line-height:16px;transform-origin:0 0;transform:scaleX(0.9377);">Open</div>
<div style="left:1230px;top:86px;width:41px;height:89px;border:2px solid #c4c4c4;"></div>
<div style="left:694px;top:175px;width:641px;height:1.4px;background:#9a9a9a;"></div>
<svg style="left:721px;top:97px;" width="22" height="22" viewBox="0 0 22 22"><path d="M12.500 0.500l8.500 7.500l-2.500 1.800l-1.800-.6l-3.700 3.700l.5 3.300l-2.300 1.600l-7-7l1.800-2.300l3.200.6l3.700-3.700l-.6-1.800z" fill="#6e6e6e"/><path d="M7 13.500l-6 7" stroke="#6e6e6e" stroke-width="2.200"/></svg>
<div class="t" style="left:701.2px;top:125px;font-size:12.2px;color:#2ee62e;line-height:16px;transform-origin:0 0;transform:scaleX(0.9359);">Pin to Quick</div>
<div class="t" style="left:716.2px;top:138px;font-size:12.2px;color:#2ee62e;line-height:16px;transform-origin:0 0;transform:scaleX(0.8216);">access</div>
<svg style="left:774px;top:93px;" width="26" height="29" viewBox="0 0 26 29"><g transform="translate(0.5,0.5)"><path d="M0.500 0.500h9.500l4.500 4.500v14.500h-14z" fill="#1d1d1d" stroke="#5a5a5a" stroke-width="1"/><path d="M9.500 7.500h10l4.500 4.500v15h-14.500z" fill="#0b0b0b" stroke="#6a6a6a" stroke-width="1"/><path d="M12 13.500h9.500M12 16.500h9.500M12 19.500h9.500M12 22.500h9.500" stroke="#5a5a5a" stroke-width="1"/></g></svg>
<div class="t" style="left:773.6px;top:125px;font-size:12.2px;color:#2ee62e;line-height:16px;transform-origin:0 0;transform:scaleX(0.8916);">Copy</div>
<svg style="left:819px;top:92px;" width="22" height="30" viewBox="0 0 22 30"><g transform="translate(0,0.5)"><rect x="1" y="3.500" width="18.500" height="24.500" fill="#0b0b0b" stroke="#7a7a7a" stroke-width="1.700"/><rect x="5.500" y="0.500" width="9.500" height="5" fill="#7a7a7a"/><path d="M4 9.500h12.500M4 12.500h12.500M4 15.500h12.500M4 18.500h12.500M4 21.500h12.500M4 24.500h12.500" stroke="#4a4a4a" stroke-width="1"/></g></svg>
<div class="t" style="left:815.5px;top:125px;font-size:12.2px;color:#2ee62e;line-height:16px;transform-origin:0 0;transform:scaleX(0.8301);">Paste</div>
<svg style="left:855px;top:91px;" width="13" height="18" viewBox="0 0 13 18"><g transform="translate(0.5,0)"><path d="M3 0.500l5 10M9 0.500L4 10.500" stroke="#8a8a8a" stroke-width="1.300"/><circle cx="3" cy="13" r="2.300" fill="none" stroke="#8a8a8a" stroke-width="1.300"/><circle cx="9" cy="13" r="2.300" fill="none" stroke="#8a8a8a" stroke-width="1.300"/></g></svg>
<div style="left:853.4px;top:117.5px;width:15px;height:8.5px;background:#1a1a1a;border:1px solid #4a4a4a;"></div>
<div class="t" style="left:855.5px;top:117px;font-size:6.5px;color:#a0a0a0;line-height:9px;transform-origin:0 0;transform:scaleX(1.2175);font-weight:bold;">\\...</div>
<svg style="left:854px;top:135px;" width="13" height="16" viewBox="0 0 13 16"><rect x="0.800" y="2.800" width="11.400" height="12.400" fill="#1a1a1a" stroke="#7a7a7a" stroke-width="1.500"/><rect x="3.800" y="0.500" width="5.400" height="3" fill="#7a7a7a"/><path d="M4 11.500l4.500-4.500M5.300 6.800h3.500v3.500" stroke="#bbb" stroke-width="1.300" fill="none"/></svg>
<svg style="left:888px;top:98px;" width="15" height="18" viewBox="0 0 15 18"><g transform="translate(0,0.5)"><rect x="0.500" y="0.500" width="11" height="15.500" fill="#1a1a1a" stroke="#3a3a3a"/><path d="M13.500 11.500H6.500M9 8.500L6.500 11.500L9 14.500" stroke="#777" stroke-width="2" fill="none"/></g></svg>
<div class="t" style="left:905.8px;top:99px;font-size:12.2px;color:#2ee62e;line-height:16px;transform-origin:0 0;transform:scaleX(0.9308);">Move to</div>
<svg style="left:950px;top:105px;" width="7" height="4" viewBox="0 0 7 4"><g transform="translate(0.7,0.5)"><path d="M0 0h6L3 3z" fill="#2ee62e"/></g></svg>
<svg style="left:888px;top:128px;" width="16" height="17" viewBox="0 0 16 17"><g transform="translate(0,0.5)"><rect x="0.500" y="0.500" width="9" height="11.500" fill="#151515" stroke="#4a4a4a"/><rect x="4.500" y="3.500" width="9.500" height="11.500" fill="#151515" stroke="#6a6a6a"/><path d="M6.500 7h5.500M6.500 9.500h5.500M6.500 12h5.500" stroke="#5a5a5a" stroke-width="0.800"/></g></svg>
<div class="t" style="left:905.8px;top:128px;font-size:12.2px;color:#2ee62e;line-height:16px;transform-origin:0 0;transform:scaleX(0.9177);">Copy to</div>
<svg style="left:949px;top:134px;" width="7" height="4" viewBox="0 0 7 4"><g transform="translate(0,0.8)"><path d="M0 0h6L3 3z" fill="#2ee62e"/></g></svg>
<div style="left:964px;top:93px;width:1px;height:55px;background:#6a6a6a;"></div>
<svg style="left:972px;top:101px;" width="14" height="13" viewBox="0 0 14 13"><path d="M1.300 1.300l11 10.500M12.300 1.300l-11 10.500" stroke="#9a9a9a" stroke-width="2.700"/></svg>
<div class="t" style="left:990.6px;top:99px;font-size:12.2px;color:#2ee62e;line-height:16px;transform-origin:0 0;transform:scaleX(0.8991);">Delete</div>
<svg style="left:1028px;top:105px;" width="7" height="4" viewBox="0 0 7 4"><g transform="translate(0,0.5)"><path d="M0 0h6L3 3z" fill="#fff"/></g></svg>
<svg style="left:970px;top:128px;" width="18" height="16" viewBox="0 0 18 16"><g transform="translate(0.5,0.5)"><rect x="0.500" y="4.500" width="11" height="5.500" fill="none" stroke="#7a7a7a" stroke-width="1"/><rect x="2.500" y="6.200" width="5" height="2.200" fill="#7a7a7a"/><path d="M12.500 0.500v13M10.300 0.500h4.400M10.300 13.500h4.400" stroke="#9a9a9a" stroke-width="1.200"/><path d="M12.500 7.300h4" stroke="#7a7a7a"/></g></svg>
<div class="t" style="left:990.6px;top:128px;font-size:12.2px;color:#2ee62e;line-height:16px;transform-origin:0 0;transform:scaleX(0.8630);">Rename</div>
<svg style="left:1057px;top:94px;" width="20" height="29" viewBox="0 0 20 29"><path d="M1 3l5-2h13v20.500l-5 7l-13-2.500z" fill="#1a1a1a"/><path d="M6 1h13v20.500l-5 7V7.500z" fill="#242424"/></svg>
<div class="t" style="left:1057.9px;top:125px;font-size:12.2px;color:#2ee62e;line-height:16px;transform-origin:0 0;transform:scaleX(0.8964);">New</div>
<div class="t" style="left:1052.9px;top:138px;font-size:12.2px;color:#2ee62e;line-height:16px;transform-origin:0 0;transform:scaleX(1.0056);">folder</div>
<svg style="left:1092px;top:90px;" width="19" height="18" viewBox="0 0 19 18"><g transform="translate(0.5,0.5)"><rect x="0.500" y="0.500" width="8" height="8" fill="#151515" stroke="#6a6a6a"/><rect x="4.500" y="3.500" width="8" height="8" fill="#151515" stroke="#6a6a6a"/><rect x="8.500" y="6.500" width="8" height="10" fill="#151515" stroke="#8a8a8a"/><path d="M10.300 9.500h4.500M10.300 11.500h4.500M10.300 13.500h4.500" stroke="#8a8a8a" stroke-width="0.800"/></g></svg>
<svg style="left:1111px;top:96px;" width="7" height="4" viewBox="0 0 7 4"><g transform="translate(0,0.5)"><path d="M0 0h6L3 3z" fill="#2ee62e"/></g></svg>
<svg style="left:1093px;top:112px;" width="17" height="18" viewBox="0 0 17 18"><g transform="translate(0,0.5)"><path d="M2.500 0.500h8l4 4v11.500h-12z" fill="#fff" stroke="#ddd"/><path d="M0 3.500h4M0.500 6h3M1 8.500h2.500" stroke="#3b8fdb" stroke-width="1"/></g></svg>
<svg style="left:1111px;top:118px;" width="7" height="4" viewBox="0 0 7 4"><g transform="translate(0,0.5)"><path d="M0 0h6L3 3z" fill="#fff"/></g></svg>
<svg style="left:1147px;top:92px;" width="24" height="30" viewBox="0 0 24 30"><g transform="translate(0.5,0.5)"><path d="M0.800 0.800h14.500l6.500 6.500v20.700h-21z" fill="#0d0d0d" stroke="#4a4a4a" stroke-width="1.300"/><path d="M15.300 0.800v6.500h6.500" fill="none" stroke="#4a4a4a" stroke-width="1.300"/><path d="M4.500 16.500l4.500 4.500l8.500-9.500" fill="none" stroke="#6e6e6e" stroke-width="2.700"/></g></svg>
<div class="t" style="left:1133.5px;top:125px;font-size:12.2px;color:#2ee62e;line-height:16px;transform-origin:0 0;transform:scaleX(0.9082);">Properties</div>
<svg style="left:1155px;top:144px;" width="7" height="4" viewBox="0 0 7 4"><g transform="translate(0.4,0.2)"><path d="M0 0h6L3 3z" fill="#2ee62e"/></g></svg>
<svg style="left:1192px;top:90px;" width="17" height="18" viewBox="0 0 17 18"><g transform="translate(0.5,0.5)"><rect x="0.500" y="0.500" width="10.500" height="14" fill="#151515" stroke="#7a7a7a"/><path d="M2.500 3.500h1.500M2.500 6.500h1.500M2.500 9.500h1.500M5.500 3.500h4M5.500 6.500h3" stroke="#8a8a8a" stroke-width="1"/><path d="M11.500 16V9M8.500 11.500l3-3.500l3 3.500" stroke="#8a8a8a" stroke-width="2" fill="none"/></g></svg>
<svg style="left:1210px;top:96px;" width="7" height="4" viewBox="0 0 7 4"><g transform="translate(0.8,0.5)"><path d="M0 0h6L3 3z" fill="#2ee62e"/></g></svg>
<svg style="left:1192px;top:112px;" width="17" height="18" viewBox="0 0 17 18"><g transform="translate(0.5,0.5)"><path d="M0.500 0.500h8l3.500 3.500v12h-11.500z" fill="#151515" stroke="#5a5a5a"/><path d="M3.500 14.500l1-4l8-8l2.500 2.500l-8 8z" fill="#222" stroke="#6a6a6a"/></g></svg>
<svg style="left:1190px;top:134px;" width="19" height="18" viewBox="0 0 19 18"><g transform="translate(0.5,0.5)"><rect x="0.500" y="0.500" width="10" height="12" fill="#2a2a2a" stroke="#3a3a3a"/><circle cx="11.500" cy="10.500" r="5.300" fill="#151515" stroke="#6a6a6a" stroke-width="1.300"/><path d="M11.500 7.500v3l2.500-1.500" stroke="#8a8a8a" stroke-width="1" fill="none"/><path d="M4.500 10.500l2.500-2v4z" fill="#6a6a6a"/></g></svg>
<div style="left:1242px;top:95.3px;width:7.5px;height:7.5px;background:#6cb8f5;border:1px solid #a6d5fb;"></div>
<div style="left:1250.5px;top:95.3px;width:7.5px;height:7.5px;background:#6cb8f5;border:1px solid #a6d5fb;"></div>
<div style="left:1242px;top:103.5px;width:7.5px;height:7.5px;background:#6cb8f5;border:1px solid #a6d5fb;"></div>
<div style="left:1250.5px;top:103.5px;width:7.5px;height:7.5px;background:#6cb8f5;border:1px solid #a6d5fb;"></div>
<div class="t" style="left:1234.5px;top:125px;font-size:12.2px;color:#fff;line-height:16px;transform-origin:0 0;transform:scaleX(0.8610);">Select</div>
<svg style="left:1246px;top:144px;" width="7" height="4" viewBox="0 0 7 4"><g transform="translate(0.5,0.2)"><path d="M0 0h6L3 3z" fill="#fff"/></g></svg>
<svg style="left:700px;top:179px;" width="14" height="17" viewBox="0 0 14 17"><g transform="translate(0,0.5)"><path d="M0.500 0.500h8l3.500 3.500v11.500H0.500z" fill="#0d0d0d" stroke="#4a4a4a"/><path d="M3 8.500l2.500 2.500l4-5" fill="none" stroke="#5a5a5a" stroke-width="1.200"/></g></svg>
<svg style="left:722px;top:179px;" width="14" height="17" viewBox="0 0 14 17"><g transform="translate(0,0.5)"><path d="M0.500 0.500h11.500v15H0.500z" fill="#1c1c1c" stroke="#2a2a2a"/><path d="M10 9h2v6.500h-2z" fill="#2e2e2e"/></g></svg>
<div style="left:745px;top:178px;width:11px;height:20px;background:#000;border:1px solid #fff;"></div>
<div style="left:748px;top:183.5px;width:5px;height:1px;background:#fff;"></div>
<svg style="left:747px;top:186px;" width="7" height="4.5" viewBox="0 0 7 4.5"><g transform="translate(0.5,0.5)"><path d="M0 0h6L3 3.500z" fill="#fff"/></g></svg>
<svg style="left:706px;top:215px;" width="13" height="12" viewBox="0 0 13 12"><path d="M12.500 5.800H1M5.500 1L1 5.800l4.500 4.700" fill="none" stroke="#cfcfcf" stroke-width="1.200"/></svg>
<svg style="left:735px;top:215px;" width="14" height="13" viewBox="0 0 14 13"><g transform="translate(0.5,0)"><path d="M0.500 5.800H12M7.500 1L12 5.800L7.500 10.500" fill="none" stroke="#cfcfcf" stroke-width="1.200"/></g></svg>
<svg style="left:762px;top:219px;" width="8" height="5" viewBox="0 0 8 5"><g transform="translate(0.3,0)"><path d="M0.5 0.5L3.15 3L5.8 0.5" fill="none" stroke="#cfcfcf" stroke-width="1"/></g></svg>
<svg style="left:780px;top:215px;" width="13" height="14" viewBox="0 0 13 14"><g transform="translate(0,0.5)"><path d="M5.700 12.500V1.500M1 6.200l4.700-4.700l4.700 4.700" fill="none" stroke="#555" stroke-width="1.500"/></g></svg>
<div style="left:799px;top:206px;width:339px;height:30px;background:#fff;border:1px solid #d9d9d9;"></div>
<svg style="left:803px;top:214px;" width="16" height="14" viewBox="0 0 16 14"><g transform="rotate(-16 9.500 6.500)"><path d="M9.500 0.300l1.700 4l4.300 .4l-3.200 2.800l1 4.200l-3.800-2.200l-3.800 2.200l1-4.200l-3.200-2.800l4.300-.4z" fill="#2b9cf0" stroke="#1c7fdc" stroke-width="0.500"/></g><path d="M0.800 7.500l4-1.300M0.300 10l4.500-1.600M1.800 12.300l4-1.800" stroke="#3c8fe0" stroke-width="0.900"/></svg>
<svg style="left:824px;top:217px;" width="7" height="9" viewBox="0 0 7 9"><g transform="translate(0,0.5)"><path d="M1 1l3 3l-3 3" fill="none" stroke="#555" stroke-width="1.200"/></g></svg>
<div class="t" style="left:839.2px;top:213px;font-size:12.3px;color:#111;line-height:16px;transform-origin:0 0;transform:scaleX(0.9200);">Quick access</div>
<svg style="left:1088px;top:218px;" width="10" height="7" viewBox="0 0 10 7"><g transform="translate(0.6,0.7)"><path d="M0.8 0.8L4.3 4.7L7.8 0.8" fill="none" stroke="#555" stroke-width="1.6"/></g></svg>
<div style="left:1107px;top:207px;width:1px;height:28px;background:#d9d9d9;"></div>
<svg style="left:1117px;top:215px;" width="12" height="13" viewBox="0 0 12 13"><path d="M10 4.500A4.700 4.700 0 1 1 6 1.700" fill="none" stroke="#555" stroke-width="1.300"/><path d="M6.300 0v3.500h3.500" fill="none" stroke="#555" stroke-width="1.200" transform="rotate(25 8 2)"/></svg>
<div style="left:1150px;top:206px;width:173px;height:30px;background:#fff;border:1px solid #d9d9d9;"></div>
<svg style="left:1164px;top:215px;" width="14" height="13" viewBox="0 0 14 13"><g transform="translate(0.5,0.5)"><circle cx="8" cy="4.500" r="3.700" fill="none" stroke="#8a8a8a" stroke-width="1"/><path d="M5.500 7.300L0.500 11.500" stroke="#8a8a8a" stroke-width="1"/></g></svg>
<div class="t" style="left:1191.3px;top:213px;font-size:12.3px;color:#6a6a6a;line-height:16px;transform-origin:0 0;transform:scaleX(0.9132);">Search Quick access</div>
<div style="left:694px;top:245px;width:641px;height:1px;background:#d0d0d0;"></div>
<div style="left:694px;top:262.5px;width:158px;height:23.5px;background:#d9d9d9;"></div>
<div style="left:853px;top:246px;width:15.5px;height:271px;background:#f0f0f0;"></div>
<div style="left:853px;top:263.5px;width:15px;height:69.5px;background:#c1c1c1;"></div>
<svg style="left:856px;top:252px;" width="9" height="6" viewBox="0 0 9 6"><g transform="translate(0.5,0)"><path d="M0.8 4.2L4 0.8L7.2 4.2" fill="none" stroke="#444" stroke-width="1.6"/></g></svg>
<svg style="left:856px;top:505px;" width="9" height="6" viewBox="0 0 9 6"><g transform="translate(0.5,0)"><path d="M0.8 0.8L4 4.2L7.2 0.8" fill="none" stroke="#444" stroke-width="1.6"/></g></svg>
<svg style="left:718px;top:267px;" width="17" height="15" viewBox="0 0 17 15"><g transform="translate(0.5,0)"><g transform="rotate(-16 9.500 6.500)"><path d="M9.500 0.300l1.700 4l4.300 .4l-3.200 2.800l1 4.200l-3.800-2.200l-3.800 2.200l1-4.200l-3.200-2.800l4.300-.4z" fill="#2b9cf0" stroke="#1c7fdc" stroke-width="0.500"/></g><path d="M0.800 7.500l4-1.300M0.300 10l4.500-1.600M1.800 12.300l4-1.800" stroke="#3c8fe0" stroke-width="0.900"/></g></svg>
<div class="t" style="left:738.1px;top:266px;font-size:12.3px;color:#111;line-height:16px;transform-origin:0 0;transform:scaleX(0.9282);">Quick access</div>
<div style="left:694px;top:246px;width:158px;height:271px;overflow:hidden;">
<div class="t" style="left:52.1px;top:44px;font-size:12.3px;color:#111;line-height:16px;transform-origin:0 0;transform:scaleX(0.9399);">Desktop</div>
<div class="t" style="left:52.1px;top:68px;font-size:12.3px;color:#111;line-height:16px;transform-origin:0 0;transform:scaleX(0.9630);">Downloads</div>
<div class="t" style="left:52.1px;top:92px;font-size:12.3px;color:#111;line-height:16px;transform-origin:0 0;transform:scaleX(0.9742);">Documents</div>
<div class="t" style="left:52.1px;top:116px;font-size:12.3px;color:#111;line-height:16px;transform-origin:0 0;transform:scaleX(0.9385);">Pictures</div>
<div class="t" style="left:52.1px;top:140px;font-size:12.3px;color:#111;line-height:16px;transform-origin:0 0;transform:scaleX(0.9027);">2022-2023</div>
<div class="t" style="left:52.1px;top:164px;font-size:12.3px;color:#111;line-height:16px;transform-origin:0 0;transform:scaleX(0.9543);">Digital Paper</div>
<div class="t" style="left:52.1px;top:188px;font-size:12.3px;color:#111;line-height:16px;transform-origin:0 0;transform:scaleX(0.9602);">Downloaded Design</div>
<div class="t" style="left:52.1px;top:212px;font-size:12.3px;color:#111;line-height:16px;transform-origin:0 0;transform:scaleX(0.8885);">Trackers</div>
</div>
<svg style="left:838px;top:292px;" width="12" height="12" viewBox="0 0 12 12"><g transform="translate(0.5,0.5)"><path d="M6.500 0.300l4.200 4.200l-1.200.6l-1-.2l-2 2l.2 1.800l-1.100.9l-4-4l.9-1.100l1.800.2l2-2l-.2-1z" fill="#8a8a8a"/><path d="M3.500 7.500L0.500 10.500" stroke="#8a8a8a" stroke-width="1.200"/></g></svg>
<svg style="left:725px;top:292px;" width="17" height="13" viewBox="0 0 17 13"><rect x="0.500" y="0.500" width="15.500" height="11" fill="#1f8fea" stroke="#1469c0"/><path d="M2 9.500h12.500" stroke="#fff" stroke-width="1" stroke-dasharray="1 1"/></svg>
<svg style="left:838px;top:316px;" width="12" height="12" viewBox="0 0 12 12"><g transform="translate(0.5,0.5)"><path d="M6.500 0.300l4.200 4.200l-1.200.6l-1-.2l-2 2l.2 1.800l-1.100.9l-4-4l.9-1.100l1.800.2l2-2l-.2-1z" fill="#8a8a8a"/><path d="M3.500 7.500L0.500 10.500" stroke="#8a8a8a" stroke-width="1.200"/></g></svg>
<svg style="left:725px;top:314px;" width="16" height="16" viewBox="0 0 16 16"><path d="M5.500 0.500h5v7h5L8 15L0.500 7.500h5z" fill="#2f7fe0"/></svg>
<svg style="left:838px;top:340px;" width="12" height="12" viewBox="0 0 12 12"><g transform="translate(0.5,0.5)"><path d="M6.500 0.300l4.200 4.200l-1.200.6l-1-.2l-2 2l.2 1.800l-1.100.9l-4-4l.9-1.100l1.800.2l2-2l-.2-1z" fill="#8a8a8a"/><path d="M3.500 7.500L0.500 10.500" stroke="#8a8a8a" stroke-width="1.200"/></g></svg>
<svg style="left:727px;top:338px;" width="13" height="16" viewBox="0 0 13 16"><path d="M0.500 0.500h8l3.500 3.500v11.500H0.500z" fill="#fff" stroke="#8a8a8a"/><path d="M3 5h5M3 7.500h7M3 10h7M3 12.500h7" stroke="#4a8ad4" stroke-width="1"/></svg>
<svg style="left:838px;top:364px;" width="12" height="12" viewBox="0 0 12 12"><g transform="translate(0.5,0.5)"><path d="M6.500 0.300l4.200 4.200l-1.200.6l-1-.2l-2 2l.2 1.800l-1.100.9l-4-4l.9-1.100l1.800.2l2-2l-.2-1z" fill="#8a8a8a"/><path d="M3.500 7.500L0.500 10.500" stroke="#8a8a8a" stroke-width="1.200"/></g></svg>
<svg style="left:725px;top:364px;" width="17" height="13" viewBox="0 0 17 13"><rect x="0.500" y="0.500" width="15" height="11" fill="#fff" stroke="#8a8a8a"/><rect x="2" y="2" width="12" height="8" fill="#7fc2ee"/><path d="M2 10l4-4l3 2.500l2-1.500l3 3z" fill="#3f8f4a"/></svg>
<svg style="left:726px;top:386px;" width="15" height="17" viewBox="0 0 15 17"><g transform="translate(0.5,0)"><path d="M0.500 0.500h10.500l2 1.500v13.500H0.500z" fill="#ffe08a" stroke="#e8c35a"/></g></svg>
<svg style="left:726px;top:410px;" width="15" height="17" viewBox="0 0 15 17"><g transform="translate(0.5,0)"><path d="M0.500 0.500h10.500l2 1.500v13.500H0.500z" fill="#ffe08a" stroke="#e8c35a"/></g></svg>
<svg style="left:726px;top:434px;" width="15" height="17" viewBox="0 0 15 17"><g transform="translate(0.5,0)"><path d="M0.500 0.500h10.500l2 1.500v13.500H0.500z" fill="#ffe08a" stroke="#e8c35a"/></g></svg>
<svg style="left:726px;top:458px;" width="15" height="17" viewBox="0 0 15 17"><g transform="translate(0.5,0)"><path d="M0.500 0.500h10.500l2 1.500v13.500H0.500z" fill="#ffe08a" stroke="#e8c35a"/></g></svg>
<svg style="left:717px;top:491px;" width="19" height="13" viewBox="0 0 19 13"><g transform="translate(0,0.5)"><path d="M4.500 11a3.500 3.500 0 0 1-.5-6.900a4.500 4.500 0 0 1 8.500-.6a3.800 3.800 0 0 1 1.500 7.500z" fill="#0f74d4"/></g></svg>
<div class="t" style="left:738.6px;top:490px;font-size:12.3px;color:#111;line-height:16px;transform-origin:0 0;transform:scaleX(0.9350);">OneDrive - Personal</div>
<div style="left:725px;top:516px;width:16px;height:1px;background:#1f8fea;"></div>
<svg style="left:879px;top:262px;" width="11" height="6" viewBox="0 0 11 6"><path d="M0.6 0.6L5.25 5.4L9.9 0.6" fill="none" stroke="#555" stroke-width="1.2"/></svg>
<div class="t" style="left:894.5px;top:255px;font-size:15px;color:#1e3287;line-height:19px;transform-origin:0 0;transform:scaleX(0.9792);">Frequent folders (8)</div>
<div style="left:1027px;top:265px;width:284px;height:1px;background:#e2e2e2;"></div>
<div style="left:1319px;top:246px;width:15.5px;height:271px;background:#f0f0f0;"></div>
<div style="left:1319px;top:264px;width:15.5px;height:35px;background:#c1c1c1;"></div>
<svg style="left:1323px;top:252px;" width="8" height="5" viewBox="0 0 8 5"><path d="M0.8 4.2L4 0.8L7.2 4.2" fill="none" stroke="#444" stroke-width="1.6"/></svg>
<svg style="left:1323px;top:505px;" width="8" height="5" viewBox="0 0 8 5"><path d="M0.8 0.8L4 4.2L7.2 0.8" fill="none" stroke="#444" stroke-width="1.6"/></svg>
<div style="left:869px;top:246px;width:450px;height:271px;overflow:hidden;">
<svg style="left:42px;top:61px;" width="15" height="13" viewBox="0 0 15 13"><g transform="translate(0.5,0.5)"><path d="M3.500 9.500a2.800 2.800 0 0 1-.3-5.500a3.600 3.600 0 0 1 6.800-.6a3.100 3.100 0 0 1 1 6.100z" fill="none" stroke="#0f74d4" stroke-width="1.200"/></g></svg>
<svg style="left:67px;top:48px;" width="42" height="42" viewBox="0 0 42 42"><path d="M0 0h25v35.500h-16l-0.500 5l-8.500-5z" fill="#f6d36f"/><path d="M0 0l8.800 5v35.500l-8.800-5z" fill="#fde7a4"/><rect x="12" y="17" width="27.500" height="19.500" fill="#1f9cf0" stroke="#1469c0"/><path d="M14 34.500h24" stroke="#fff" stroke-width="1" stroke-dasharray="1 1"/></svg>
<div class="t" style="left:112.4px;top:42px;font-size:12.3px;color:#111;line-height:16px;transform-origin:0 0;transform:scaleX(0.9333);">Desktop</div>
<div class="t" style="left:112.4px;top:58px;font-size:12.3px;color:#767676;line-height:16px;transform-origin:0 0;transform:scaleX(0.9368);">OneDrive - Personal</div>
<svg style="left:112px;top:76px;" width="12" height="12" viewBox="0 0 12 12"><g transform="translate(0.5,0.5)"><path d="M6.500 0.300l4.200 4.200l-1.200.6l-1-.2l-2 2l.2 1.800l-1.100.9l-4-4l.9-1.100l1.800.2l2-2l-.2-1z" fill="#8a8a8a"/><path d="M3.500 7.500L0.500 10.500" stroke="#8a8a8a" stroke-width="1.200"/></g></svg>
<svg style="left:67px;top:112px;" width="42" height="42" viewBox="0 0 42 42"><path d="M0 0h25v35.500h-16l-0.500 5l-8.500-5z" fill="#f6d36f"/><path d="M0 0l8.800 5v35.500l-8.800-5z" fill="#fde7a4"/><path d="M19 14h10v11h7L24 38L12 25h7z" fill="#2f7fe0"/></svg>
<div class="t" style="left:112.4px;top:107px;font-size:12.3px;color:#111;line-height:16px;transform-origin:0 0;transform:scaleX(0.9580);">Downloads</div>
<div class="t" style="left:112.4px;top:123px;font-size:12.3px;color:#767676;line-height:16px;transform-origin:0 0;transform:scaleX(0.8753);">This PC</div>
<svg style="left:112px;top:140px;" width="12" height="12" viewBox="0 0 12 12"><g transform="translate(0.5,0.5)"><path d="M6.500 0.300l4.200 4.200l-1.200.6l-1-.2l-2 2l.2 1.800l-1.100.9l-4-4l.9-1.100l1.800.2l2-2l-.2-1z" fill="#8a8a8a"/><path d="M3.500 7.500L0.500 10.500" stroke="#8a8a8a" stroke-width="1.200"/></g></svg>
<svg style="left:42px;top:189px;" width="15" height="13" viewBox="0 0 15 13"><g transform="translate(0.5,0.5)"><path d="M3.500 9.500a2.800 2.800 0 0 1-.3-5.500a3.600 3.600 0 0 1 6.800-.6a3.100 3.100 0 0 1 1 6.100z" fill="none" stroke="#0f74d4" stroke-width="1.200"/></g></svg>
<svg style="left:67px;top:176px;" width="42" height="42" viewBox="0 0 42 42"><path d="M0 0h25v35.500h-16l-0.500 5l-8.500-5z" fill="#f6d36f"/><path d="M0 0l8.800 5v35.500l-8.800-5z" fill="#fde7a4"/><path d="M11.500 10.500h13l6 6v21h-19z" fill="#fff" stroke="#9a9a9a"/><path d="M14 19h8M14 23h14M14 27h14M14 31h14" stroke="#5a8fcf" stroke-width="1.200"/><rect x="20" y="24" width="8" height="6" fill="#4a6a8a"/></svg>
<div class="t" style="left:112.4px;top:171px;font-size:12.3px;color:#111;line-height:16px;transform-origin:0 0;transform:scaleX(0.9693);">Documents</div>
<div class="t" style="left:112.4px;top:187px;font-size:12.3px;color:#767676;line-height:16px;transform-origin:0 0;transform:scaleX(0.9368);">OneDrive - Personal</div>
<svg style="left:112px;top:204px;" width="12" height="12" viewBox="0 0 12 12"><g transform="translate(0.5,0.5)"><path d="M6.500 0.300l4.200 4.200l-1.200.6l-1-.2l-2 2l.2 1.800l-1.100.9l-4-4l.9-1.100l1.800.2l2-2l-.2-1z" fill="#8a8a8a"/><path d="M3.500 7.500L0.500 10.500" stroke="#8a8a8a" stroke-width="1.200"/></g></svg>
<svg style="left:42px;top:253px;" width="15" height="13" viewBox="0 0 15 13"><g transform="translate(0.5,0.5)"><path d="M3.500 9.500a2.800 2.800 0 0 1-.3-5.500a3.600 3.600 0 0 1 6.800-.6a3.100 3.100 0 0 1 1 6.100z" fill="none" stroke="#0f74d4" stroke-width="1.200"/></g></svg>
<svg style="left:67px;top:240px;" width="42" height="42" viewBox="0 0 42 42"><path d="M0 0h25v35.500h-16l-0.500 5l-8.500-5z" fill="#f6d36f"/><path d="M0 0l8.800 5v35.500l-8.800-5z" fill="#fde7a4"/><rect x="11.500" y="16.500" width="28" height="22" fill="#fff" stroke="#9a9a9a"/><rect x="13.500" y="18.500" width="24" height="18" fill="#7fc2ee"/><path d="M13.500 30c5-6 9-6 14-3s7 2 10 1v8.500h-24z" fill="#3f7f3a"/></svg>
<div class="t" style="left:112.4px;top:235px;font-size:12.3px;color:#111;line-height:16px;transform-origin:0 0;transform:scaleX(0.9362);">Pictures</div>
<div class="t" style="left:112.4px;top:251px;font-size:12.3px;color:#767676;line-height:16px;transform-origin:0 0;transform:scaleX(0.9368);">OneDrive - Personal</div>
<svg style="left:112px;top:268px;" width="12" height="12" viewBox="0 0 12 12"><g transform="translate(0.5,0.5)"><path d="M6.500 0.300l4.200 4.200l-1.200.6l-1-.2l-2 2l.2 1.800l-1.100.9l-4-4l.9-1.100l1.800.2l2-2l-.2-1z" fill="#8a8a8a"/><path d="M3.500 7.500L0.500 10.500" stroke="#8a8a8a" stroke-width="1.200"/></g></svg>
</div>
<div class="t" style="left:707px;top:521px;font-size:12.3px;color:#333;line-height:16px;transform-origin:0 0;transform:scaleX(0.9378);">28 items</div>
<div style="left:761px;top:521px;width:1px;height:15px;background:#e6e6e6;"></div>
<svg style="left:1290px;top:522px;" width="17" height="12" viewBox="0 0 17 12"><path d="M0.500 0.500h3v3h-3zM0.500 4.500h3v3h-3zM0.500 8.500h3v3h-3z" fill="none" stroke="#8a8a8a" stroke-width="0.800"/><path d="M5.500 2h4M11 2h4M5.500 6h4M11 6h4M5.500 10h4M11 10h4" stroke="#8a8a8a" stroke-width="1"/></svg>
<div style="left:1312px;top:521px;width:16px;height:14px;background:#fff;border:1px solid #8a8a8a;"></div>
<div style="left:1315px;top:524px;width:10px;height:8px;background:#3f6f9a;"></div>
</div></body></html>
